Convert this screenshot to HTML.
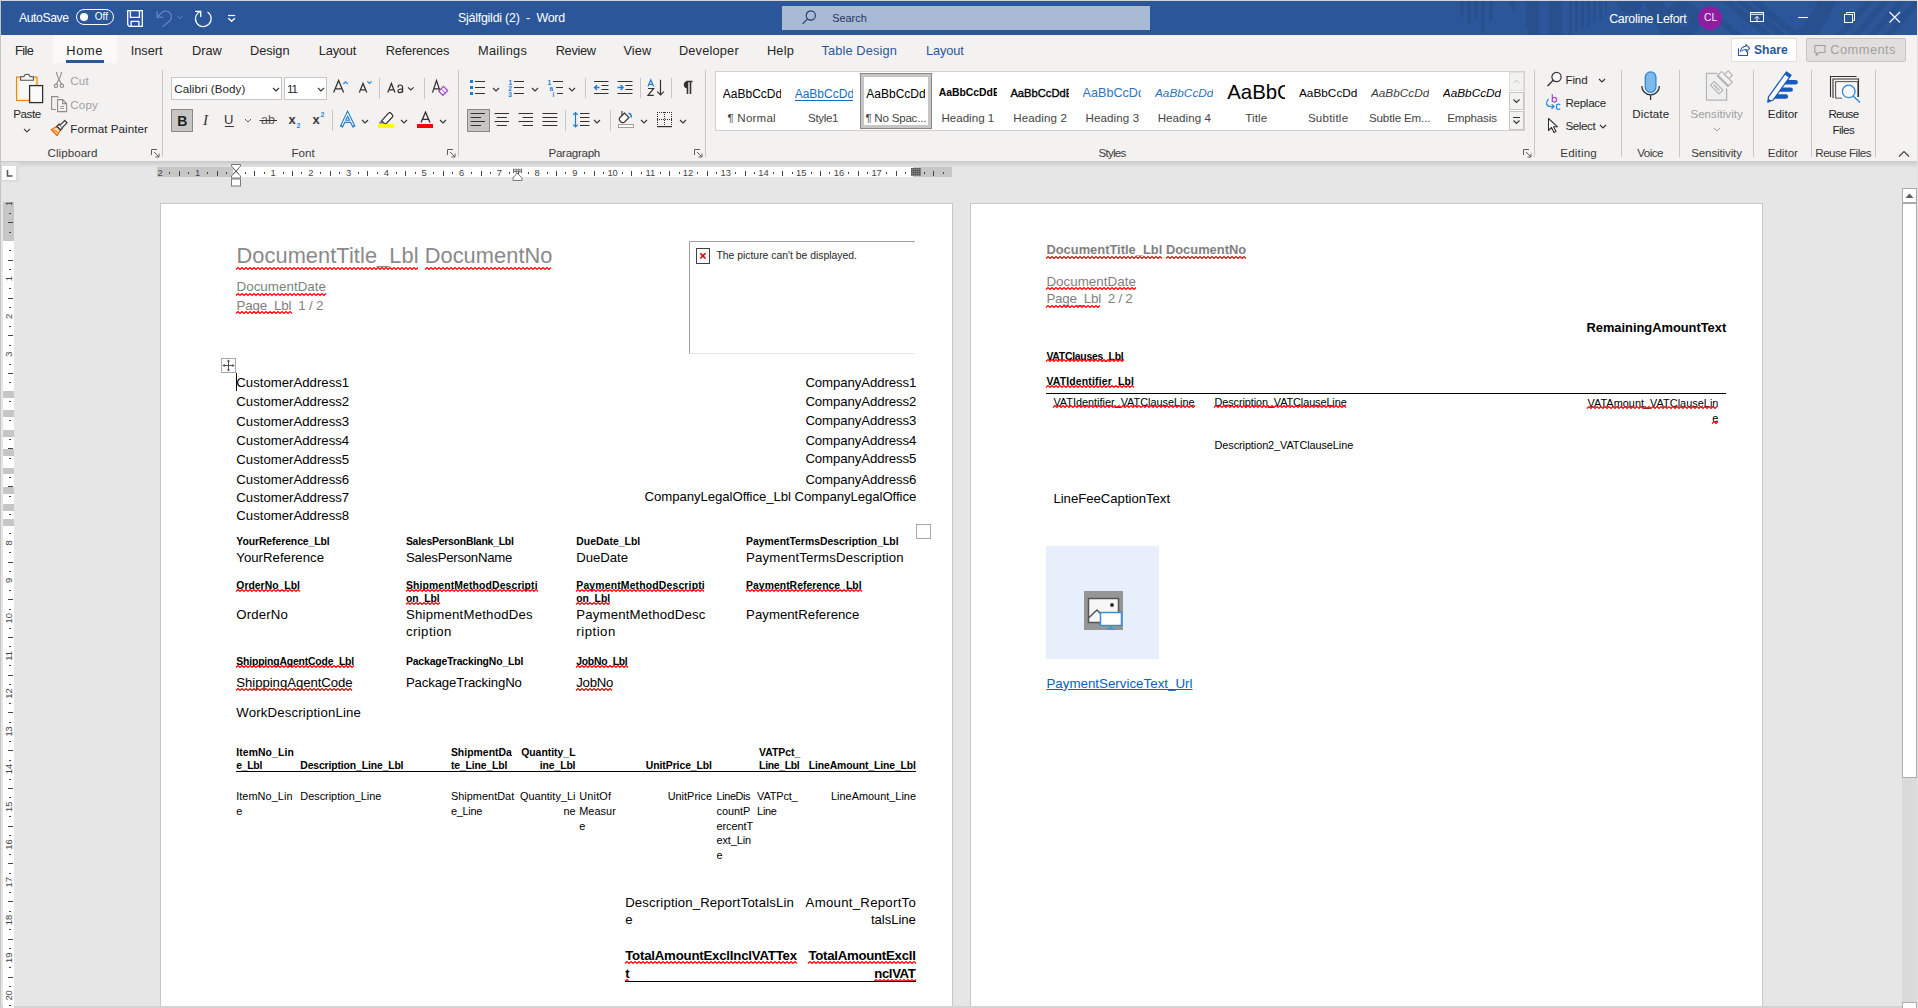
<!DOCTYPE html>
<html><head><meta charset="utf-8"><style>
html,body{margin:0;padding:0;}
body{width:1918px;height:1008px;overflow:hidden;position:relative;background:#e6e6e6;font-family:"Liberation Sans",sans-serif;color:#000;}
.t{position:absolute;white-space:nowrap;line-height:1;}
.r{position:absolute;}
.sq{text-decoration:underline wavy #e81123;text-decoration-thickness:1px;text-underline-offset:2px;text-decoration-skip-ink:none;}
</style></head><body>
<div class="r" style="left:0px;top:0px;width:1918px;height:1008px;background:#e6e6e6;"></div>
<div class="r" style="left:0px;top:0px;width:1918px;height:35px;background:#2b579a;"></div>
<div class="r" style="left:0px;top:0px;width:1918px;height:1px;background:#d4d4d4;"></div>
<div class="r" style="left:0px;top:35px;width:1918px;height:126px;background:#f3f2f1;"></div>
<div class="r" style="left:0px;top:0px;width:1px;height:1008px;background:#c4c4c4;"></div>
<div class="r" style="left:1px;top:161px;width:1917px;height:7px;background:linear-gradient(#c9c9c9,#e6e6e6);"></div>
<div class="r" style="left:160px;top:203px;width:793px;height:805px;background:#ffffff;box-sizing:border-box;border:1px solid #c6c6c6;border-bottom:none"></div>
<div class="r" style="left:970px;top:203px;width:793px;height:805px;background:#ffffff;box-sizing:border-box;border:1px solid #c6c6c6;border-bottom:none"></div>
<div class="r" style="left:0px;top:1006px;width:1918px;height:2px;background:#d4d4d4;"></div>
<div class="r" style="left:1902px;top:188px;width:15px;height:820px;background:#dadada;"></div>
<div class="r" style="left:1902px;top:188px;width:15px;height:15px;background:#ffffff;box-sizing:border-box;border:1px solid #ababab"></div>
<svg class="r" style="left:1902px;top:188px;" width="15" height="15" viewBox="0 0 15 15"><path d="M3.5 10 L7.5 5.5 L11.5 10 Z" fill="#606060"/></svg>
<div class="r" style="left:1902px;top:203px;width:15px;height:575px;background:#ffffff;box-sizing:border-box;border:1px solid #ababab"></div>
<div class="r" style="left:1902px;top:1002px;width:15px;height:6px;background:#ffffff;box-sizing:border-box;border:1px solid #ababab;border-bottom:none"></div>
<div class="r" style="left:1917px;top:168px;width:1px;height:840px;background:#d0d0d0;"></div>
<svg class="r" style="left:1440px;top:1px;" width="478" height="34" viewBox="0 0 478 34"><g fill="#284f8e"><rect x="20" y="0" width="4" height="16"/><rect x="27" y="0" width="4" height="23"/><rect x="34" y="0" width="4" height="17"/><rect x="41" y="0" width="4" height="32"/><rect x="49" y="0" width="4" height="20"/><path d="M68 0 H75 L75 13 Z"/><path d="M86 0 H99 V34 H90 L86 24 Z"/><rect x="109" y="0" width="13" height="34"/><rect x="129" y="0" width="3" height="34"/><rect x="135" y="0" width="3" height="31"/><rect x="141" y="0" width="3" height="28"/><rect x="147" y="0" width="3" height="25"/><rect x="153" y="0" width="3" height="22"/><rect x="159" y="0" width="3" height="19"/><rect x="165" y="0" width="2" height="14"/><path d="M177 0 H204 A13.5 12.5 0 0 1 177 0 Z"/></g><circle cx="242.5" cy="18.6" r="12.6" fill="none" stroke="#284f8e" stroke-width="11"/><g stroke="#284f8e" stroke-width="6"><path d="M284 -2 L330 36"/><path d="M298 -2 L344 36"/><path d="M312 -2 L358 36"/><path d="M274 14 L300 36"/></g><circle cx="300" cy="-31" r="92" fill="none" stroke="#284f8e" stroke-width="17"/><g stroke="#284f8e" stroke-width="6"><path d="M432 -2 L398 36"/><path d="M448 -2 L414 36"/><path d="M464 -2 L430 36"/><path d="M480 -2 L446 36"/></g></svg>
<div class="t" style="top:11.67px;font-size:12.2px;left:19.00px;color:#ffffff;letter-spacing:-0.415px;white-space:pre;">AutoSave</div>
<div class="r" style="left:76px;top:9px;width:38px;height:16px;box-sizing:border-box;border:1.3px solid #fff;border-radius:8px"></div>
<div class="r" style="left:80px;top:13px;width:8px;height:8px;background:#fff;border-radius:50%"></div>
<div class="t" style="top:12.34px;font-size:10.0px;left:94.80px;color:#ffffff;">Off</div>
<svg class="r" style="left:126px;top:10px;" width="18" height="18" viewBox="0 0 18 18"><path d="M1.7 0.7 H16.3 V16.3 H3.2 L1.7 14.8 Z" fill="none" stroke="#fff" stroke-width="1.3"/><path d="M4.4 1 V7.4 H13.4 V1" fill="none" stroke="#fff" stroke-width="1.3"/><path d="M5.1 16.3 V11.4 H12.9 V16.3" fill="none" stroke="#fff" stroke-width="1.3"/></svg>
<svg class="r" style="left:154px;top:10px;" width="32" height="18" viewBox="0 0 32 18"><path d="M3.2 1.2 V7.2 H9.2" fill="none" stroke="#6d8ec4" stroke-width="1.1"/><path d="M3.2 7.2 L7.5 2.8 A5.5 5.5 0 0 1 15.8 10.8 L8.5 16.8" fill="none" stroke="#6d8ec4" stroke-width="1.1"/><path d="M23.5 6.2 L26 8.7 L28.5 6.2" fill="none" stroke="#6d8ec4" stroke-width="0.9"/></svg>
<svg class="r" style="left:193px;top:10px;" width="20" height="18" viewBox="0 0 20 18"><path d="M7.7 1.3 A7.85 7.85 0 1 0 14.5 2.1" fill="none" stroke="#fff" stroke-width="1.2"/><path d="M2 1.3 H7.7 V6.9" fill="none" stroke="#fff" stroke-width="1.3"/></svg>
<svg class="r" style="left:226px;top:12px;" width="12" height="12" viewBox="0 0 12 12"><path d="M2 3.5 H9.2" stroke="#fff" stroke-width="1.2"/><path d="M2.3 6.2 L5.6 9.2 L8.9 6.2" fill="none" stroke="#fff" stroke-width="1.4"/></svg>
<div class="t" style="top:12.00px;font-size:12.4px;left:457.90px;color:#ffffff;letter-spacing:-0.217px;white-space:pre;">Sjálfgildi (2)  -  Word</div>
<div class="r" style="left:782px;top:6px;width:368px;height:24px;background:#a8bad6;"></div>
<svg class="r" style="left:800px;top:8px;" width="18" height="20" viewBox="0 0 18 20"><circle cx="10.8" cy="7.5" r="4.6" fill="none" stroke="#1f3864" stroke-width="1.1"/><path d="M7.6 10.8 L2.6 15.8" stroke="#1f3864" stroke-width="1.2"/></svg>
<div class="t" style="top:12.87px;font-size:10.9px;left:832.20px;color:#1e3762;">Search</div>
<div class="t" style="top:12.50px;font-size:12.4px;left:1609.20px;color:#ffffff;letter-spacing:-0.273px;white-space:pre;">Caroline Lefort</div>
<div class="r" style="left:1698px;top:6px;width:24px;height:24px;background:#8e1e9f;border-radius:50%"></div>
<div class="t" style="top:12.88px;font-size:10.3px;left:1704.00px;color:#f4e6f7;">CL</div>
<svg class="r" style="left:1748px;top:10px;" width="18" height="14" viewBox="0 0 18 14"><rect x="2.5" y="2.5" width="13" height="9" fill="none" stroke="#fff" stroke-width="1"/><path d="M2.5 4.3 H15.5" stroke="#fff" stroke-width="1"/><path d="M9 11 V6.5 M6.8 8.6 L9 6.4 L11.2 8.6" fill="none" stroke="#fff" stroke-width="1"/></svg>
<div class="r" style="left:1798px;top:17px;width:10px;height:1px;background:#fff;"></div>
<svg class="r" style="left:1842px;top:10px;" width="14" height="14" viewBox="0 0 14 14"><rect x="2.5" y="4.5" width="8" height="8" fill="none" stroke="#fff" stroke-width="1"/><path d="M4.5 4.5 V2.5 H12.5 V10.5 H10.5" fill="none" stroke="#fff" stroke-width="1"/></svg>
<svg class="r" style="left:1888px;top:10px;" width="14" height="14" viewBox="0 0 14 14"><path d="M1.5 2 L12 12.5 M12 2 L1.5 12.5" stroke="#fff" stroke-width="1.1"/></svg>
<div class="r" style="left:1917px;top:0px;width:1px;height:1008px;background:#e2e2e2;"></div>
<div class="r" style="left:53px;top:35px;width:64px;height:28px;background:#faf9f8;"></div>
<div class="r" style="left:66px;top:60px;width:38px;height:3px;background:#2b579a;"></div>
<div class="t" style="top:44.67px;font-size:12.8px;left:15.00px;color:#262626;letter-spacing:-0.608px;">File</div>
<div class="t" style="top:44.67px;font-size:12.8px;left:66.30px;color:#201f1e;letter-spacing:0.686px;">Home</div>
<div class="t" style="top:44.67px;font-size:12.8px;left:130.80px;color:#262626;letter-spacing:-0.062px;">Insert</div>
<div class="t" style="top:44.67px;font-size:12.8px;left:192.00px;color:#262626;letter-spacing:-0.023px;">Draw</div>
<div class="t" style="top:44.67px;font-size:12.8px;left:250.00px;color:#262626;letter-spacing:-0.068px;">Design</div>
<div class="t" style="top:44.67px;font-size:12.8px;left:318.80px;color:#262626;letter-spacing:-0.186px;">Layout</div>
<div class="t" style="top:44.67px;font-size:12.8px;left:385.80px;color:#262626;letter-spacing:-0.217px;">References</div>
<div class="t" style="top:44.67px;font-size:12.8px;left:478.00px;color:#262626;letter-spacing:0.265px;">Mailings</div>
<div class="t" style="top:44.67px;font-size:12.8px;left:555.70px;color:#262626;letter-spacing:-0.314px;">Review</div>
<div class="t" style="top:44.67px;font-size:12.8px;left:623.40px;color:#262626;letter-spacing:0.096px;">View</div>
<div class="t" style="top:44.67px;font-size:12.8px;left:678.90px;color:#262626;letter-spacing:0.182px;">Developer</div>
<div class="t" style="top:44.67px;font-size:12.8px;left:766.90px;color:#262626;letter-spacing:0.192px;">Help</div>
<div class="t" style="top:44.67px;font-size:12.8px;left:821.50px;color:#2b579a;letter-spacing:0.119px;">Table Design</div>
<div class="t" style="top:44.67px;font-size:12.8px;left:926.10px;color:#2b579a;letter-spacing:-0.146px;">Layout</div>
<div class="r" style="left:1731px;top:38px;width:66px;height:24px;background:#ffffff;box-sizing:border-box;border:1px solid #e1dfdd;border-radius:2px"></div>
<svg class="r" style="left:1736px;top:43px;" width="16" height="15" viewBox="0 0 16 15"><path d="M2.5 5.3 V12.5 H11.5 V8.4" fill="none" stroke="#2b579a" stroke-width="1.1"/><path d="M4.4 8.9 Q4.9 3.7 9.8 3.2 V1.4 L13.7 5.4 L10.3 8.6 V6.6 Q7.1 6.5 5.6 8.1" fill="none" stroke="#2b579a" stroke-width="1.05" stroke-linejoin="round"/></svg>
<div class="t" style="top:44.31px;font-size:12.16px;left:1754.00px;font-weight:700;color:#2b579a;">Share</div>
<div class="r" style="left:1806px;top:38px;width:100px;height:24px;background:#e1dfdd;box-sizing:border-box;border:1px solid #c8c6c4;border-radius:2px"></div>
<svg class="r" style="left:1813px;top:44px;" width="14" height="13" viewBox="0 0 14 13"><path d="M1.8 1.5 H12 V8.5 H6 L3.3 11.3 V8.5 H1.8 Z" fill="none" stroke="#a19f9d" stroke-width="1.1"/></svg>
<div class="t" style="top:43.68px;font-size:12.9px;left:1830.30px;color:#a19f9d;letter-spacing:0.406px;white-space:pre;">Comments</div>
<div class="t" style="top:245.15px;font-size:21.8px;left:236.50px;color:#8a8a8a;letter-spacing:0.066px;white-space:pre;">DocumentTitle_Lbl DocumentNo</div>
<svg class="r" style="left:236px;top:267px;overflow:visible" width="183" height="3"><polyline points="0,2.5 2,0.5 4,2.5 6,0.5 8,2.5 10,0.5 12,2.5 14,0.5 16,2.5 18,0.5 20,2.5 22,0.5 24,2.5 26,0.5 28,2.5 30,0.5 32,2.5 34,0.5 36,2.5 38,0.5 40,2.5 42,0.5 44,2.5 46,0.5 48,2.5 50,0.5 52,2.5 54,0.5 56,2.5 58,0.5 60,2.5 62,0.5 64,2.5 66,0.5 68,2.5 70,0.5 72,2.5 74,0.5 76,2.5 78,0.5 80,2.5 82,0.5 84,2.5 86,0.5 88,2.5 90,0.5 92,2.5 94,0.5 96,2.5 98,0.5 100,2.5 102,0.5 104,2.5 106,0.5 108,2.5 110,0.5 112,2.5 114,0.5 116,2.5 118,0.5 120,2.5 122,0.5 124,2.5 126,0.5 128,2.5 130,0.5 132,2.5 134,0.5 136,2.5 138,0.5 140,2.5 142,0.5 144,2.5 146,0.5 148,2.5 150,0.5 152,2.5 154,0.5 156,2.5 158,0.5 160,2.5 162,0.5 164,2.5 166,0.5 168,2.5 170,0.5 172,2.5 174,0.5 176,2.5 178,0.5 180,2.5 182,0.5" fill="none" stroke="#ff0000" stroke-width="1.15"/></svg>
<svg class="r" style="left:425px;top:267px;overflow:visible" width="128" height="3"><polyline points="0,2.5 2,0.5 4,2.5 6,0.5 8,2.5 10,0.5 12,2.5 14,0.5 16,2.5 18,0.5 20,2.5 22,0.5 24,2.5 26,0.5 28,2.5 30,0.5 32,2.5 34,0.5 36,2.5 38,0.5 40,2.5 42,0.5 44,2.5 46,0.5 48,2.5 50,0.5 52,2.5 54,0.5 56,2.5 58,0.5 60,2.5 62,0.5 64,2.5 66,0.5 68,2.5 70,0.5 72,2.5 74,0.5 76,2.5 78,0.5 80,2.5 82,0.5 84,2.5 86,0.5 88,2.5 90,0.5 92,2.5 94,0.5 96,2.5 98,0.5 100,2.5 102,0.5 104,2.5 106,0.5 108,2.5 110,0.5 112,2.5 114,0.5 116,2.5 118,0.5 120,2.5 122,0.5 124,2.5 126,0.5" fill="none" stroke="#ff0000" stroke-width="1.15"/></svg>
<div class="t" style="top:280.46px;font-size:13.4px;left:236.50px;color:#7f7f7f;letter-spacing:0.012px;white-space:pre;">DocumentDate</div>
<svg class="r" style="left:236px;top:293px;overflow:visible" width="91" height="3"><polyline points="0,2.5 2,0.5 4,2.5 6,0.5 8,2.5 10,0.5 12,2.5 14,0.5 16,2.5 18,0.5 20,2.5 22,0.5 24,2.5 26,0.5 28,2.5 30,0.5 32,2.5 34,0.5 36,2.5 38,0.5 40,2.5 42,0.5 44,2.5 46,0.5 48,2.5 50,0.5 52,2.5 54,0.5 56,2.5 58,0.5 60,2.5 62,0.5 64,2.5 66,0.5 68,2.5 70,0.5 72,2.5 74,0.5 76,2.5 78,0.5 80,2.5 82,0.5 84,2.5 86,0.5 88,2.5 90,0.5" fill="none" stroke="#ff0000" stroke-width="1.15"/></svg>
<div class="t" style="top:298.76px;font-size:13.4px;left:236.50px;color:#7f7f7f;letter-spacing:-0.224px;white-space:pre;">Page_Lbl  1 / 2</div>
<svg class="r" style="left:236px;top:311px;overflow:visible" width="57" height="3"><polyline points="0,2.5 2,0.5 4,2.5 6,0.5 8,2.5 10,0.5 12,2.5 14,0.5 16,2.5 18,0.5 20,2.5 22,0.5 24,2.5 26,0.5 28,2.5 30,0.5 32,2.5 34,0.5 36,2.5 38,0.5 40,2.5 42,0.5 44,2.5 46,0.5 48,2.5 50,0.5 52,2.5 54,0.5 56,2.5" fill="none" stroke="#ff0000" stroke-width="1.15"/></svg>
<div class="r" style="left:689px;top:241px;width:226px;height:113px;box-sizing:border-box;border-left:1px solid #a0a0a0;border-top:1px solid #a0a0a0;border-bottom:1px solid #e6e6e6"></div>
<div class="r" style="left:696px;top:248px;width:14px;height:16px;background:#fff;box-sizing:border-box;border:1px solid #404040;border-right-width:1.5px;border-bottom-width:1.5px"></div>
<svg class="r" style="left:696px;top:248px;" width="14" height="16" viewBox="0 0 14 16"><path d="M4.3 5.3 L9.5 10.5 M9.5 5.3 L4.3 10.5" stroke="#e00000" stroke-width="1.6"/></svg>
<div class="t" style="top:250.60px;font-size:10.4px;left:716.40px;color:#262626;">The picture can&#39;t be displayed.</div>
<div class="r" style="left:221px;top:358px;width:15px;height:15px;background:#fff;box-sizing:border-box;border:1px solid #a8a8a8"></div>
<svg class="r" style="left:221px;top:358px;" width="15" height="15" viewBox="0 0 15 15"><path d="M7.5 2.5 V12.5 M2.5 7.5 H12.5" stroke="#505050" stroke-width="1"/><path d="M7.5 1.5 L5.8 3.6 H9.2Z M7.5 13.5 L5.8 11.4 H9.2Z M1.5 7.5 L3.6 5.8 V9.2Z M13.5 7.5 L11.4 5.8 V9.2Z" fill="#505050"/></svg>
<div class="r" style="left:236px;top:373px;width:1px;height:18px;background:#000;"></div>
<div class="t" style="top:375.93px;font-size:13.2px;left:236.30px;letter-spacing:0.002px;white-space:pre;">CustomerAddress1</div>
<div class="t" style="top:394.73px;font-size:13.2px;left:236.30px;letter-spacing:0.002px;white-space:pre;">CustomerAddress2</div>
<div class="t" style="top:415.13px;font-size:13.2px;left:236.30px;letter-spacing:0.002px;white-space:pre;">CustomerAddress3</div>
<div class="t" style="top:433.93px;font-size:13.2px;left:236.30px;letter-spacing:0.002px;white-space:pre;">CustomerAddress4</div>
<div class="t" style="top:452.73px;font-size:13.2px;left:236.30px;letter-spacing:0.002px;white-space:pre;">CustomerAddress5</div>
<div class="t" style="top:472.93px;font-size:13.2px;left:236.30px;letter-spacing:0.002px;white-space:pre;">CustomerAddress6</div>
<div class="t" style="top:491.03px;font-size:13.2px;left:236.30px;letter-spacing:0.002px;white-space:pre;">CustomerAddress7</div>
<div class="t" style="top:509.03px;font-size:13.2px;left:236.30px;letter-spacing:0.002px;white-space:pre;">CustomerAddress8</div>
<div class="t" style="top:375.63px;font-size:13.2px;right:1001.79px;letter-spacing:-0.089px;white-space:pre;">CompanyAddress1</div>
<div class="t" style="top:394.83px;font-size:13.2px;right:1001.79px;letter-spacing:-0.089px;white-space:pre;">CompanyAddress2</div>
<div class="t" style="top:414.33px;font-size:13.2px;right:1001.79px;letter-spacing:-0.089px;white-space:pre;">CompanyAddress3</div>
<div class="t" style="top:433.73px;font-size:13.2px;right:1001.79px;letter-spacing:-0.089px;white-space:pre;">CompanyAddress4</div>
<div class="t" style="top:452.43px;font-size:13.2px;right:1001.79px;letter-spacing:-0.089px;white-space:pre;">CompanyAddress5</div>
<div class="t" style="top:472.83px;font-size:13.2px;right:1001.79px;letter-spacing:-0.089px;white-space:pre;">CompanyAddress6</div>
<div class="t" style="top:490.13px;font-size:13.2px;right:1001.77px;letter-spacing:-0.067px;white-space:pre;">CompanyLegalOffice_Lbl CompanyLegalOffice</div>
<div class="r" style="left:916px;top:524px;width:15px;height:15px;box-sizing:border-box;border:1px solid #a8a8a8"></div>
<div class="t" style="top:536.50px;font-size:10.4px;left:236.30px;font-weight:700;letter-spacing:-0.068px;white-space:pre;">YourReference_Lbl</div>
<div class="t" style="top:536.50px;font-size:10.4px;left:405.90px;font-weight:700;letter-spacing:-0.217px;white-space:pre;">SalesPersonBlank_Lbl</div>
<div class="t" style="top:536.50px;font-size:10.4px;left:576.30px;font-weight:700;letter-spacing:0.044px;white-space:pre;">DueDate_Lbl</div>
<div class="t" style="top:536.50px;font-size:10.4px;left:746.10px;font-weight:700;letter-spacing:0.009px;white-space:pre;">PaymentTermsDescription_Lbl</div>
<div class="t" style="top:550.63px;font-size:13.2px;left:236.30px;letter-spacing:0.019px;white-space:pre;">YourReference</div>
<div class="t" style="top:550.63px;font-size:13.2px;left:405.90px;letter-spacing:-0.246px;white-space:pre;">SalesPersonName</div>
<div class="t" style="top:550.63px;font-size:13.2px;left:576.30px;letter-spacing:-0.049px;white-space:pre;">DueDate</div>
<div class="t" style="top:550.63px;font-size:13.2px;left:746.10px;letter-spacing:0.166px;white-space:pre;">PaymentTermsDescription</div>
<div class="t" style="top:581.30px;font-size:10.4px;left:236.30px;font-weight:700;letter-spacing:0.014px;white-space:pre;">OrderNo_Lbl</div>
<svg class="r" style="left:236px;top:589px;overflow:visible" width="65" height="3"><polyline points="0,2.5 2,0.5 4,2.5 6,0.5 8,2.5 10,0.5 12,2.5 14,0.5 16,2.5 18,0.5 20,2.5 22,0.5 24,2.5 26,0.5 28,2.5 30,0.5 32,2.5 34,0.5 36,2.5 38,0.5 40,2.5 42,0.5 44,2.5 46,0.5 48,2.5 50,0.5 52,2.5 54,0.5 56,2.5 58,0.5 60,2.5 62,0.5 64,2.5" fill="none" stroke="#ff0000" stroke-width="1.15"/></svg>
<div class="t" style="top:581.30px;font-size:10.4px;left:405.90px;font-weight:700;letter-spacing:0.134px;white-space:pre;">ShipmentMethodDescripti</div>
<svg class="r" style="left:406px;top:589px;overflow:visible" width="133" height="3"><polyline points="0,2.5 2,0.5 4,2.5 6,0.5 8,2.5 10,0.5 12,2.5 14,0.5 16,2.5 18,0.5 20,2.5 22,0.5 24,2.5 26,0.5 28,2.5 30,0.5 32,2.5 34,0.5 36,2.5 38,0.5 40,2.5 42,0.5 44,2.5 46,0.5 48,2.5 50,0.5 52,2.5 54,0.5 56,2.5 58,0.5 60,2.5 62,0.5 64,2.5 66,0.5 68,2.5 70,0.5 72,2.5 74,0.5 76,2.5 78,0.5 80,2.5 82,0.5 84,2.5 86,0.5 88,2.5 90,0.5 92,2.5 94,0.5 96,2.5 98,0.5 100,2.5 102,0.5 104,2.5 106,0.5 108,2.5 110,0.5 112,2.5 114,0.5 116,2.5 118,0.5 120,2.5 122,0.5 124,2.5 126,0.5 128,2.5 130,0.5 132,2.5" fill="none" stroke="#ff0000" stroke-width="1.15"/></svg>
<div class="t" style="top:594.10px;font-size:10.4px;left:405.90px;font-weight:700;letter-spacing:-0.056px;white-space:pre;">on_Lbl</div>
<svg class="r" style="left:406px;top:602px;overflow:visible" width="35" height="3"><polyline points="0,2.5 2,0.5 4,2.5 6,0.5 8,2.5 10,0.5 12,2.5 14,0.5 16,2.5 18,0.5 20,2.5 22,0.5 24,2.5 26,0.5 28,2.5 30,0.5 32,2.5 34,0.5" fill="none" stroke="#ff0000" stroke-width="1.15"/></svg>
<div class="t" style="top:581.30px;font-size:10.4px;left:576.30px;font-weight:700;letter-spacing:0.175px;white-space:pre;">PaymentMethodDescripti</div>
<svg class="r" style="left:576px;top:589px;overflow:visible" width="130" height="3"><polyline points="0,2.5 2,0.5 4,2.5 6,0.5 8,2.5 10,0.5 12,2.5 14,0.5 16,2.5 18,0.5 20,2.5 22,0.5 24,2.5 26,0.5 28,2.5 30,0.5 32,2.5 34,0.5 36,2.5 38,0.5 40,2.5 42,0.5 44,2.5 46,0.5 48,2.5 50,0.5 52,2.5 54,0.5 56,2.5 58,0.5 60,2.5 62,0.5 64,2.5 66,0.5 68,2.5 70,0.5 72,2.5 74,0.5 76,2.5 78,0.5 80,2.5 82,0.5 84,2.5 86,0.5 88,2.5 90,0.5 92,2.5 94,0.5 96,2.5 98,0.5 100,2.5 102,0.5 104,2.5 106,0.5 108,2.5 110,0.5 112,2.5 114,0.5 116,2.5 118,0.5 120,2.5 122,0.5 124,2.5 126,0.5 128,2.5" fill="none" stroke="#ff0000" stroke-width="1.15"/></svg>
<div class="t" style="top:594.10px;font-size:10.4px;left:576.30px;font-weight:700;letter-spacing:-0.056px;white-space:pre;">on_Lbl</div>
<svg class="r" style="left:576px;top:602px;overflow:visible" width="35" height="3"><polyline points="0,2.5 2,0.5 4,2.5 6,0.5 8,2.5 10,0.5 12,2.5 14,0.5 16,2.5 18,0.5 20,2.5 22,0.5 24,2.5 26,0.5 28,2.5 30,0.5 32,2.5 34,0.5" fill="none" stroke="#ff0000" stroke-width="1.15"/></svg>
<div class="t" style="top:581.30px;font-size:10.4px;left:746.10px;font-weight:700;letter-spacing:0.031px;white-space:pre;">PaymentReference_Lbl</div>
<svg class="r" style="left:746px;top:589px;overflow:visible" width="117" height="3"><polyline points="0,2.5 2,0.5 4,2.5 6,0.5 8,2.5 10,0.5 12,2.5 14,0.5 16,2.5 18,0.5 20,2.5 22,0.5 24,2.5 26,0.5 28,2.5 30,0.5 32,2.5 34,0.5 36,2.5 38,0.5 40,2.5 42,0.5 44,2.5 46,0.5 48,2.5 50,0.5 52,2.5 54,0.5 56,2.5 58,0.5 60,2.5 62,0.5 64,2.5 66,0.5 68,2.5 70,0.5 72,2.5 74,0.5 76,2.5 78,0.5 80,2.5 82,0.5 84,2.5 86,0.5 88,2.5 90,0.5 92,2.5 94,0.5 96,2.5 98,0.5 100,2.5 102,0.5 104,2.5 106,0.5 108,2.5 110,0.5 112,2.5 114,0.5 116,2.5" fill="none" stroke="#ff0000" stroke-width="1.15"/></svg>
<div class="t" style="top:607.83px;font-size:13.2px;left:236.30px;letter-spacing:0.148px;white-space:pre;">OrderNo</div>
<div class="t" style="top:607.83px;font-size:13.2px;left:405.90px;letter-spacing:0.228px;white-space:pre;">ShipmentMethodDes</div>
<div class="t" style="top:625.33px;font-size:13.2px;left:405.90px;letter-spacing:0.436px;white-space:pre;">cription</div>
<div class="t" style="top:607.83px;font-size:13.2px;left:576.30px;letter-spacing:0.182px;white-space:pre;">PaymentMethodDesc</div>
<div class="t" style="top:625.33px;font-size:13.2px;left:576.30px;letter-spacing:0.508px;white-space:pre;">ription</div>
<div class="t" style="top:607.83px;font-size:13.2px;left:746.10px;letter-spacing:0.021px;white-space:pre;">PaymentReference</div>
<div class="t" style="top:656.90px;font-size:10.4px;left:236.30px;font-weight:700;letter-spacing:-0.166px;white-space:pre;">ShippingAgentCode_Lbl</div>
<svg class="r" style="left:236px;top:665px;overflow:visible" width="119" height="3"><polyline points="0,2.5 2,0.5 4,2.5 6,0.5 8,2.5 10,0.5 12,2.5 14,0.5 16,2.5 18,0.5 20,2.5 22,0.5 24,2.5 26,0.5 28,2.5 30,0.5 32,2.5 34,0.5 36,2.5 38,0.5 40,2.5 42,0.5 44,2.5 46,0.5 48,2.5 50,0.5 52,2.5 54,0.5 56,2.5 58,0.5 60,2.5 62,0.5 64,2.5 66,0.5 68,2.5 70,0.5 72,2.5 74,0.5 76,2.5 78,0.5 80,2.5 82,0.5 84,2.5 86,0.5 88,2.5 90,0.5 92,2.5 94,0.5 96,2.5 98,0.5 100,2.5 102,0.5 104,2.5 106,0.5 108,2.5 110,0.5 112,2.5 114,0.5 116,2.5 118,0.5" fill="none" stroke="#ff0000" stroke-width="1.15"/></svg>
<div class="t" style="top:656.90px;font-size:10.4px;left:405.90px;font-weight:700;letter-spacing:-0.131px;white-space:pre;">PackageTrackingNo_Lbl</div>
<div class="t" style="top:656.90px;font-size:10.4px;left:576.30px;font-weight:700;letter-spacing:-0.278px;white-space:pre;">JobNo_Lbl</div>
<svg class="r" style="left:576px;top:665px;overflow:visible" width="53" height="3"><polyline points="0,2.5 2,0.5 4,2.5 6,0.5 8,2.5 10,0.5 12,2.5 14,0.5 16,2.5 18,0.5 20,2.5 22,0.5 24,2.5 26,0.5 28,2.5 30,0.5 32,2.5 34,0.5 36,2.5 38,0.5 40,2.5 42,0.5 44,2.5 46,0.5 48,2.5 50,0.5 52,2.5" fill="none" stroke="#ff0000" stroke-width="1.15"/></svg>
<div class="t" style="top:675.53px;font-size:13.2px;left:236.30px;letter-spacing:-0.058px;white-space:pre;">ShippingAgentCode</div>
<svg class="r" style="left:236px;top:688px;overflow:visible" width="118" height="3"><polyline points="0,2.5 2,0.5 4,2.5 6,0.5 8,2.5 10,0.5 12,2.5 14,0.5 16,2.5 18,0.5 20,2.5 22,0.5 24,2.5 26,0.5 28,2.5 30,0.5 32,2.5 34,0.5 36,2.5 38,0.5 40,2.5 42,0.5 44,2.5 46,0.5 48,2.5 50,0.5 52,2.5 54,0.5 56,2.5 58,0.5 60,2.5 62,0.5 64,2.5 66,0.5 68,2.5 70,0.5 72,2.5 74,0.5 76,2.5 78,0.5 80,2.5 82,0.5 84,2.5 86,0.5 88,2.5 90,0.5 92,2.5 94,0.5 96,2.5 98,0.5 100,2.5 102,0.5 104,2.5 106,0.5 108,2.5 110,0.5 112,2.5 114,0.5 116,2.5" fill="none" stroke="#ff0000" stroke-width="1.15"/></svg>
<div class="t" style="top:675.53px;font-size:13.2px;left:405.90px;letter-spacing:-0.141px;white-space:pre;">PackageTrackingNo</div>
<div class="t" style="top:675.53px;font-size:13.2px;left:576.30px;letter-spacing:-0.289px;white-space:pre;">JobNo</div>
<svg class="r" style="left:576px;top:688px;overflow:visible" width="38" height="3"><polyline points="0,2.5 2,0.5 4,2.5 6,0.5 8,2.5 10,0.5 12,2.5 14,0.5 16,2.5 18,0.5 20,2.5 22,0.5 24,2.5 26,0.5 28,2.5 30,0.5 32,2.5 34,0.5 36,2.5" fill="none" stroke="#ff0000" stroke-width="1.15"/></svg>
<div class="t" style="top:706.03px;font-size:13.2px;left:236.30px;letter-spacing:0.176px;white-space:pre;">WorkDescriptionLine</div>
<div class="t" style="top:748.10px;font-size:10.4px;left:236.20px;font-weight:700;letter-spacing:0.109px;white-space:pre;">ItemNo_Lin</div>
<div class="t" style="top:760.60px;font-size:10.4px;left:236.20px;font-weight:700;letter-spacing:-0.240px;white-space:pre;">e_Lbl</div>
<div class="t" style="top:760.60px;font-size:10.4px;left:300.30px;font-weight:700;letter-spacing:-0.129px;white-space:pre;">Description_Line_Lbl</div>
<div class="t" style="top:748.10px;font-size:10.4px;left:450.90px;font-weight:700;letter-spacing:0.037px;white-space:pre;">ShipmentDa</div>
<div class="t" style="top:760.60px;font-size:10.4px;left:450.90px;font-weight:700;letter-spacing:-0.118px;white-space:pre;">te_Line_Lbl</div>
<div class="t" style="top:748.10px;font-size:10.4px;right:1342.49px;font-weight:700;letter-spacing:0.010px;white-space:pre;">Quantity_L</div>
<div class="t" style="top:760.60px;font-size:10.4px;right:1342.62px;font-weight:700;letter-spacing:-0.117px;white-space:pre;">ine_Lbl</div>
<div class="t" style="top:760.60px;font-size:10.4px;right:1206.07px;font-weight:700;letter-spacing:-0.069px;white-space:pre;">UnitPrice_Lbl</div>
<div class="t" style="top:748.10px;font-size:10.4px;left:759.10px;font-weight:700;letter-spacing:-0.004px;white-space:pre;">VATPct_</div>
<div class="t" style="top:760.60px;font-size:10.4px;left:759.10px;font-weight:700;letter-spacing:-0.308px;white-space:pre;">Line_Lbl</div>
<div class="t" style="top:760.60px;font-size:10.4px;right:1002.11px;font-weight:700;letter-spacing:-0.105px;white-space:pre;">LineAmount_Line_Lbl</div>
<div class="r" style="left:236px;top:771px;width:680px;height:1px;background:#000;"></div>
<div class="t" style="top:791.17px;font-size:10.9px;left:236.20px;letter-spacing:0.063px;white-space:pre;">ItemNo_Lin</div>
<div class="t" style="top:806.07px;font-size:10.9px;left:236.20px;white-space:pre;">e</div>
<div class="t" style="top:791.17px;font-size:10.9px;left:300.30px;letter-spacing:-0.006px;white-space:pre;">Description_Line</div>
<div class="t" style="top:791.17px;font-size:10.9px;left:450.90px;letter-spacing:0.039px;white-space:pre;">ShipmentDat</div>
<div class="t" style="top:806.07px;font-size:10.9px;left:450.90px;letter-spacing:-0.246px;white-space:pre;">e_Line</div>
<div class="t" style="top:791.17px;font-size:10.9px;right:1342.45px;letter-spacing:0.046px;white-space:pre;">Quantity_Li</div>
<div class="t" style="top:806.07px;font-size:10.9px;right:1342.50px;white-space:pre;">ne</div>
<div class="t" style="top:791.17px;font-size:10.9px;left:579.20px;letter-spacing:0.202px;white-space:pre;">UnitOf</div>
<div class="t" style="top:806.07px;font-size:10.9px;left:579.20px;letter-spacing:0.071px;white-space:pre;">Measur</div>
<div class="t" style="top:820.57px;font-size:10.9px;left:579.20px;white-space:pre;">e</div>
<div class="t" style="top:791.17px;font-size:10.9px;right:1205.98px;letter-spacing:0.023px;white-space:pre;">UnitPrice</div>
<div class="t" style="top:791.17px;font-size:10.9px;left:716.50px;letter-spacing:-0.375px;white-space:pre;">LineDis</div>
<div class="t" style="top:806.07px;font-size:10.9px;left:716.50px;letter-spacing:-0.047px;white-space:pre;">countP</div>
<div class="t" style="top:820.57px;font-size:10.9px;left:716.50px;letter-spacing:-0.042px;white-space:pre;">ercentT</div>
<div class="t" style="top:835.17px;font-size:10.9px;left:716.50px;letter-spacing:-0.074px;white-space:pre;">ext_Lin</div>
<div class="t" style="top:849.77px;font-size:10.9px;left:716.50px;white-space:pre;">e</div>
<div class="t" style="top:791.17px;font-size:10.9px;left:757.10px;letter-spacing:-0.132px;white-space:pre;">VATPct_</div>
<div class="t" style="top:806.07px;font-size:10.9px;left:757.10px;letter-spacing:-0.269px;white-space:pre;">Line</div>
<div class="t" style="top:791.17px;font-size:10.9px;right:1001.98px;letter-spacing:0.019px;white-space:pre;">LineAmount_Line</div>
<div class="t" style="top:895.53px;font-size:13.2px;left:625.20px;letter-spacing:0.143px;white-space:pre;">Description_ReportTotalsLin</div>
<div class="t" style="top:913.33px;font-size:13.2px;left:625.20px;white-space:pre;">e</div>
<div class="t" style="top:895.53px;font-size:13.2px;right:1001.92px;letter-spacing:0.280px;white-space:pre;">Amount_ReportTo</div>
<div class="t" style="top:913.33px;font-size:13.2px;right:1002.28px;letter-spacing:-0.085px;white-space:pre;">talsLine</div>
<div class="t" style="top:949.03px;font-size:13.2px;left:625.20px;font-weight:700;letter-spacing:-0.187px;white-space:pre;">TotalAmountExclInclVATTex</div>
<svg class="r" style="left:625px;top:961px;overflow:visible" width="173" height="3"><polyline points="0,2.5 2,0.5 4,2.5 6,0.5 8,2.5 10,0.5 12,2.5 14,0.5 16,2.5 18,0.5 20,2.5 22,0.5 24,2.5 26,0.5 28,2.5 30,0.5 32,2.5 34,0.5 36,2.5 38,0.5 40,2.5 42,0.5 44,2.5 46,0.5 48,2.5 50,0.5 52,2.5 54,0.5 56,2.5 58,0.5 60,2.5 62,0.5 64,2.5 66,0.5 68,2.5 70,0.5 72,2.5 74,0.5 76,2.5 78,0.5 80,2.5 82,0.5 84,2.5 86,0.5 88,2.5 90,0.5 92,2.5 94,0.5 96,2.5 98,0.5 100,2.5 102,0.5 104,2.5 106,0.5 108,2.5 110,0.5 112,2.5 114,0.5 116,2.5 118,0.5 120,2.5 122,0.5 124,2.5 126,0.5 128,2.5 130,0.5 132,2.5 134,0.5 136,2.5 138,0.5 140,2.5 142,0.5 144,2.5 146,0.5 148,2.5 150,0.5 152,2.5 154,0.5 156,2.5 158,0.5 160,2.5 162,0.5 164,2.5 166,0.5 168,2.5 170,0.5 172,2.5" fill="none" stroke="#ff0000" stroke-width="1.15"/></svg>
<div class="t" style="top:966.83px;font-size:13.2px;left:625.20px;font-weight:700;white-space:pre;">t</div>
<svg class="r" style="left:625px;top:979px;overflow:visible" width="6" height="3"><polyline points="0,2.5 2,0.5 4,2.5" fill="none" stroke="#ff0000" stroke-width="1.15"/></svg>
<div class="t" style="top:949.03px;font-size:13.2px;right:1002.45px;font-weight:700;letter-spacing:-0.248px;white-space:pre;">TotalAmountExclI</div>
<svg class="r" style="left:808px;top:961px;overflow:visible" width="109" height="3"><polyline points="0,2.5 2,0.5 4,2.5 6,0.5 8,2.5 10,0.5 12,2.5 14,0.5 16,2.5 18,0.5 20,2.5 22,0.5 24,2.5 26,0.5 28,2.5 30,0.5 32,2.5 34,0.5 36,2.5 38,0.5 40,2.5 42,0.5 44,2.5 46,0.5 48,2.5 50,0.5 52,2.5 54,0.5 56,2.5 58,0.5 60,2.5 62,0.5 64,2.5 66,0.5 68,2.5 70,0.5 72,2.5 74,0.5 76,2.5 78,0.5 80,2.5 82,0.5 84,2.5 86,0.5 88,2.5 90,0.5 92,2.5 94,0.5 96,2.5 98,0.5 100,2.5 102,0.5 104,2.5 106,0.5 108,2.5" fill="none" stroke="#ff0000" stroke-width="1.15"/></svg>
<div class="t" style="top:966.83px;font-size:13.2px;right:1002.58px;font-weight:700;letter-spacing:-0.382px;white-space:pre;">nclVAT</div>
<svg class="r" style="left:874px;top:979px;overflow:visible" width="43" height="3"><polyline points="0,2.5 2,0.5 4,2.5 6,0.5 8,2.5 10,0.5 12,2.5 14,0.5 16,2.5 18,0.5 20,2.5 22,0.5 24,2.5 26,0.5 28,2.5 30,0.5 32,2.5 34,0.5 36,2.5 38,0.5 40,2.5 42,0.5" fill="none" stroke="#ff0000" stroke-width="1.15"/></svg>
<div class="r" style="left:625px;top:981px;width:291px;height:1px;background:#000;"></div>
<div class="t" style="top:243.78px;font-size:12.9px;left:1046.40px;font-weight:700;color:#7f7f7f;letter-spacing:0.007px;white-space:pre;">DocumentTitle_Lbl DocumentNo</div>
<svg class="r" style="left:1046px;top:256px;overflow:visible" width="117" height="3"><polyline points="0,2.5 2,0.5 4,2.5 6,0.5 8,2.5 10,0.5 12,2.5 14,0.5 16,2.5 18,0.5 20,2.5 22,0.5 24,2.5 26,0.5 28,2.5 30,0.5 32,2.5 34,0.5 36,2.5 38,0.5 40,2.5 42,0.5 44,2.5 46,0.5 48,2.5 50,0.5 52,2.5 54,0.5 56,2.5 58,0.5 60,2.5 62,0.5 64,2.5 66,0.5 68,2.5 70,0.5 72,2.5 74,0.5 76,2.5 78,0.5 80,2.5 82,0.5 84,2.5 86,0.5 88,2.5 90,0.5 92,2.5 94,0.5 96,2.5 98,0.5 100,2.5 102,0.5 104,2.5 106,0.5 108,2.5 110,0.5 112,2.5 114,0.5 116,2.5" fill="none" stroke="#ff0000" stroke-width="1.15"/></svg>
<svg class="r" style="left:1166px;top:256px;overflow:visible" width="81" height="3"><polyline points="0,2.5 2,0.5 4,2.5 6,0.5 8,2.5 10,0.5 12,2.5 14,0.5 16,2.5 18,0.5 20,2.5 22,0.5 24,2.5 26,0.5 28,2.5 30,0.5 32,2.5 34,0.5 36,2.5 38,0.5 40,2.5 42,0.5 44,2.5 46,0.5 48,2.5 50,0.5 52,2.5 54,0.5 56,2.5 58,0.5 60,2.5 62,0.5 64,2.5 66,0.5 68,2.5 70,0.5 72,2.5 74,0.5 76,2.5 78,0.5 80,2.5" fill="none" stroke="#ff0000" stroke-width="1.15"/></svg>
<div class="t" style="top:274.56px;font-size:13.4px;left:1046.40px;color:#7f7f7f;letter-spacing:0.012px;white-space:pre;">DocumentDate</div>
<svg class="r" style="left:1046px;top:287px;overflow:visible" width="91" height="3"><polyline points="0,2.5 2,0.5 4,2.5 6,0.5 8,2.5 10,0.5 12,2.5 14,0.5 16,2.5 18,0.5 20,2.5 22,0.5 24,2.5 26,0.5 28,2.5 30,0.5 32,2.5 34,0.5 36,2.5 38,0.5 40,2.5 42,0.5 44,2.5 46,0.5 48,2.5 50,0.5 52,2.5 54,0.5 56,2.5 58,0.5 60,2.5 62,0.5 64,2.5 66,0.5 68,2.5 70,0.5 72,2.5 74,0.5 76,2.5 78,0.5 80,2.5 82,0.5 84,2.5 86,0.5 88,2.5 90,0.5" fill="none" stroke="#ff0000" stroke-width="1.15"/></svg>
<div class="t" style="top:292.36px;font-size:13.4px;left:1046.40px;color:#7f7f7f;letter-spacing:-0.267px;white-space:pre;">Page_Lbl  2 / 2</div>
<svg class="r" style="left:1046px;top:305px;overflow:visible" width="56" height="3"><polyline points="0,2.5 2,0.5 4,2.5 6,0.5 8,2.5 10,0.5 12,2.5 14,0.5 16,2.5 18,0.5 20,2.5 22,0.5 24,2.5 26,0.5 28,2.5 30,0.5 32,2.5 34,0.5 36,2.5 38,0.5 40,2.5 42,0.5 44,2.5 46,0.5 48,2.5 50,0.5 52,2.5 54,0.5" fill="none" stroke="#ff0000" stroke-width="1.15"/></svg>
<div class="t" style="top:321.88px;font-size:12.9px;right:191.82px;font-weight:700;letter-spacing:-0.024px;white-space:pre;">RemainingAmountText</div>
<div class="t" style="top:351.60px;font-size:10.4px;left:1046.40px;font-weight:700;letter-spacing:-0.240px;white-space:pre;">VATClauses_Lbl</div>
<svg class="r" style="left:1046px;top:359px;overflow:visible" width="79" height="3"><polyline points="0,2.5 2,0.5 4,2.5 6,0.5 8,2.5 10,0.5 12,2.5 14,0.5 16,2.5 18,0.5 20,2.5 22,0.5 24,2.5 26,0.5 28,2.5 30,0.5 32,2.5 34,0.5 36,2.5 38,0.5 40,2.5 42,0.5 44,2.5 46,0.5 48,2.5 50,0.5 52,2.5 54,0.5 56,2.5 58,0.5 60,2.5 62,0.5 64,2.5 66,0.5 68,2.5 70,0.5 72,2.5 74,0.5 76,2.5 78,0.5" fill="none" stroke="#ff0000" stroke-width="1.15"/></svg>
<div class="t" style="top:377.40px;font-size:10.4px;left:1046.40px;font-weight:700;letter-spacing:0.191px;white-space:pre;">VATIdentifier_Lbl</div>
<svg class="r" style="left:1046px;top:385px;overflow:visible" width="89" height="3"><polyline points="0,2.5 2,0.5 4,2.5 6,0.5 8,2.5 10,0.5 12,2.5 14,0.5 16,2.5 18,0.5 20,2.5 22,0.5 24,2.5 26,0.5 28,2.5 30,0.5 32,2.5 34,0.5 36,2.5 38,0.5 40,2.5 42,0.5 44,2.5 46,0.5 48,2.5 50,0.5 52,2.5 54,0.5 56,2.5 58,0.5 60,2.5 62,0.5 64,2.5 66,0.5 68,2.5 70,0.5 72,2.5 74,0.5 76,2.5 78,0.5 80,2.5 82,0.5 84,2.5 86,0.5 88,2.5" fill="none" stroke="#ff0000" stroke-width="1.15"/></svg>
<div class="r" style="left:1046px;top:393px;width:680px;height:1px;background:#000;"></div>
<div class="t" style="top:397.07px;font-size:10.9px;left:1053.40px;letter-spacing:-0.010px;white-space:pre;">VATIdentifier_VATClauseLine</div>
<svg class="r" style="left:1053px;top:405px;overflow:visible" width="143" height="3"><polyline points="0,2.5 2,0.5 4,2.5 6,0.5 8,2.5 10,0.5 12,2.5 14,0.5 16,2.5 18,0.5 20,2.5 22,0.5 24,2.5 26,0.5 28,2.5 30,0.5 32,2.5 34,0.5 36,2.5 38,0.5 40,2.5 42,0.5 44,2.5 46,0.5 48,2.5 50,0.5 52,2.5 54,0.5 56,2.5 58,0.5 60,2.5 62,0.5 64,2.5 66,0.5 68,2.5 70,0.5 72,2.5 74,0.5 76,2.5 78,0.5 80,2.5 82,0.5 84,2.5 86,0.5 88,2.5 90,0.5 92,2.5 94,0.5 96,2.5 98,0.5 100,2.5 102,0.5 104,2.5 106,0.5 108,2.5 110,0.5 112,2.5 114,0.5 116,2.5 118,0.5 120,2.5 122,0.5 124,2.5 126,0.5 128,2.5 130,0.5 132,2.5 134,0.5 136,2.5 138,0.5 140,2.5 142,0.5" fill="none" stroke="#ff0000" stroke-width="1.15"/></svg>
<div class="t" style="top:397.07px;font-size:10.9px;left:1214.50px;letter-spacing:-0.100px;white-space:pre;">Description_VATClauseLine</div>
<svg class="r" style="left:1214px;top:405px;overflow:visible" width="134" height="3"><polyline points="0,2.5 2,0.5 4,2.5 6,0.5 8,2.5 10,0.5 12,2.5 14,0.5 16,2.5 18,0.5 20,2.5 22,0.5 24,2.5 26,0.5 28,2.5 30,0.5 32,2.5 34,0.5 36,2.5 38,0.5 40,2.5 42,0.5 44,2.5 46,0.5 48,2.5 50,0.5 52,2.5 54,0.5 56,2.5 58,0.5 60,2.5 62,0.5 64,2.5 66,0.5 68,2.5 70,0.5 72,2.5 74,0.5 76,2.5 78,0.5 80,2.5 82,0.5 84,2.5 86,0.5 88,2.5 90,0.5 92,2.5 94,0.5 96,2.5 98,0.5 100,2.5 102,0.5 104,2.5 106,0.5 108,2.5 110,0.5 112,2.5 114,0.5 116,2.5 118,0.5 120,2.5 122,0.5 124,2.5 126,0.5 128,2.5 130,0.5 132,2.5" fill="none" stroke="#ff0000" stroke-width="1.15"/></svg>
<div class="t" style="top:397.77px;font-size:10.9px;right:199.57px;letter-spacing:0.026px;white-space:pre;">VATAmount_VATClauseLin</div>
<svg class="r" style="left:1587px;top:406px;overflow:visible" width="132" height="3"><polyline points="0,2.5 2,0.5 4,2.5 6,0.5 8,2.5 10,0.5 12,2.5 14,0.5 16,2.5 18,0.5 20,2.5 22,0.5 24,2.5 26,0.5 28,2.5 30,0.5 32,2.5 34,0.5 36,2.5 38,0.5 40,2.5 42,0.5 44,2.5 46,0.5 48,2.5 50,0.5 52,2.5 54,0.5 56,2.5 58,0.5 60,2.5 62,0.5 64,2.5 66,0.5 68,2.5 70,0.5 72,2.5 74,0.5 76,2.5 78,0.5 80,2.5 82,0.5 84,2.5 86,0.5 88,2.5 90,0.5 92,2.5 94,0.5 96,2.5 98,0.5 100,2.5 102,0.5 104,2.5 106,0.5 108,2.5 110,0.5 112,2.5 114,0.5 116,2.5 118,0.5 120,2.5 122,0.5 124,2.5 126,0.5 128,2.5 130,0.5" fill="none" stroke="#ff0000" stroke-width="1.15"/></svg>
<div class="t" style="top:412.67px;font-size:10.9px;right:199.60px;white-space:pre;">e</div>
<svg class="r" style="left:1712px;top:421px;overflow:visible" width="7" height="3"><polyline points="0,2.5 2,0.5 4,2.5 6,0.5" fill="none" stroke="#ff0000" stroke-width="1.15"/></svg>
<div class="t" style="top:440.37px;font-size:10.9px;left:1214.50px;letter-spacing:-0.078px;white-space:pre;">Description2_VATClauseLine</div>
<div class="t" style="top:491.93px;font-size:13.2px;left:1053.40px;letter-spacing:-0.035px;white-space:pre;">LineFeeCaptionText</div>
<div class="r" style="left:1046px;top:546px;width:113px;height:113px;background:#e8effc;"></div>
<div class="r" style="left:1084px;top:591px;width:39px;height:39px;background:#969696;"></div>
<svg class="r" style="left:1084px;top:591px;" width="39" height="39" viewBox="0 0 39 39"><rect x="4.5" y="7.5" width="30" height="24" fill="#f7f7f7" stroke="#555" stroke-width="1.5"/><path d="M4.5 27 L13 19 L20 26" fill="none" stroke="#555" stroke-width="1.5"/><circle cx="28" cy="14" r="2" fill="#333"/><rect x="16.5" y="21.5" width="21" height="13" fill="#fff" stroke="#3a8fd6" stroke-width="1.5"/><path d="M27 35 V37.5 M23 37.8 H31" stroke="#3a8fd6" stroke-width="1.2"/></svg>
<div class="t" style="top:676.50px;font-size:13.35px;left:1046.40px;color:#0563c1;text-decoration:underline;text-underline-offset:1px;">PaymentServiceText_Url</div>
<div class="t" style="top:146.78px;font-size:11.6px;left:47.50px;color:#3b3a39;letter-spacing:0.044px;">Clipboard</div>
<div class="t" style="top:146.78px;font-size:11.6px;left:291.40px;color:#3b3a39;letter-spacing:0.030px;">Font</div>
<div class="t" style="top:147.08px;font-size:11.6px;left:548.50px;color:#3b3a39;letter-spacing:-0.296px;">Paragraph</div>
<div class="t" style="top:146.58px;font-size:11.6px;left:1098.50px;color:#3b3a39;letter-spacing:-0.758px;">Styles</div>
<div class="t" style="top:146.88px;font-size:11.6px;left:1560.30px;color:#3b3a39;letter-spacing:0.172px;">Editing</div>
<div class="t" style="top:146.88px;font-size:11.6px;left:1637.20px;color:#3b3a39;letter-spacing:-0.519px;">Voice</div>
<div class="t" style="top:146.88px;font-size:11.6px;left:1691.20px;color:#3b3a39;letter-spacing:-0.142px;">Sensitivity</div>
<div class="t" style="top:146.88px;font-size:11.6px;left:1767.70px;color:#3b3a39;letter-spacing:-0.000px;">Editor</div>
<div class="t" style="top:146.88px;font-size:11.6px;left:1815.30px;color:#3b3a39;letter-spacing:-0.504px;">Reuse Files</div>
<div class="r" style="left:162px;top:70px;width:1px;height:87px;background:#c8c6c4;"></div>
<div class="r" style="left:458px;top:70px;width:1px;height:87px;background:#c8c6c4;"></div>
<div class="r" style="left:705px;top:70px;width:1px;height:87px;background:#c8c6c4;"></div>
<div class="r" style="left:1534px;top:70px;width:1px;height:87px;background:#c8c6c4;"></div>
<div class="r" style="left:1621px;top:70px;width:1px;height:87px;background:#c8c6c4;"></div>
<div class="r" style="left:1679px;top:70px;width:1px;height:87px;background:#c8c6c4;"></div>
<div class="r" style="left:1753px;top:70px;width:1px;height:87px;background:#c8c6c4;"></div>
<div class="r" style="left:1811px;top:70px;width:1px;height:87px;background:#c8c6c4;"></div>
<div class="r" style="left:1875px;top:70px;width:1px;height:87px;background:#c8c6c4;"></div>
<svg class="r" style="left:151px;top:149px;" width="9" height="9" viewBox="0 0 9 9"><path d="M0.5 6 V0.5 H6" fill="none" stroke="#605e5c" stroke-width="1"/><path d="M3 3 L8 8 M4.5 8 H8 V4.5" fill="none" stroke="#605e5c" stroke-width="1"/></svg>
<svg class="r" style="left:447px;top:149px;" width="9" height="9" viewBox="0 0 9 9"><path d="M0.5 6 V0.5 H6" fill="none" stroke="#605e5c" stroke-width="1"/><path d="M3 3 L8 8 M4.5 8 H8 V4.5" fill="none" stroke="#605e5c" stroke-width="1"/></svg>
<svg class="r" style="left:694px;top:149px;" width="9" height="9" viewBox="0 0 9 9"><path d="M0.5 6 V0.5 H6" fill="none" stroke="#605e5c" stroke-width="1"/><path d="M3 3 L8 8 M4.5 8 H8 V4.5" fill="none" stroke="#605e5c" stroke-width="1"/></svg>
<svg class="r" style="left:1523px;top:149px;" width="9" height="9" viewBox="0 0 9 9"><path d="M0.5 6 V0.5 H6" fill="none" stroke="#605e5c" stroke-width="1"/><path d="M3 3 L8 8 M4.5 8 H8 V4.5" fill="none" stroke="#605e5c" stroke-width="1"/></svg>
<svg class="r" style="left:1898px;top:150px;" width="12" height="8" viewBox="0 0 12 8"><path d="M1 6.5 L6 1.5 L11 6.5" fill="none" stroke="#444" stroke-width="1.2"/></svg>
<div class="t" style="top:108.18px;font-size:11.6px;left:13.20px;color:#262626;letter-spacing:-0.415px;">Paste</div>
<svg class="r" style="left:23.2px;top:127.5px;" width="8" height="5" viewBox="0 0 8 5"><path d="M1 1 L4.0 4 L7 1" fill="none" stroke="#444" stroke-width="1.1"/></svg>
<div class="t" style="top:75.38px;font-size:11.6px;left:70.30px;color:#a19f9d;letter-spacing:0.175px;">Cut</div>
<div class="t" style="top:99.38px;font-size:11.6px;left:70.30px;color:#a19f9d;letter-spacing:0.140px;">Copy</div>
<div class="t" style="top:123.28px;font-size:11.6px;left:70.30px;color:#262626;letter-spacing:0.076px;">Format Painter</div>
<svg class="r" style="left:13px;top:71px;" width="34" height="34" viewBox="0 0 34 34"><rect x="3.6" y="6.1" width="20.4" height="23.4" fill="#f9f9f9" stroke="#e8891d" stroke-width="1.3"/><rect x="5" y="7.5" width="17.6" height="20.6" fill="none" stroke="#fde4a0" stroke-width="1"/><path d="M7.6 9.3 V5.8 H10.8 A3.3 3.3 0 0 1 17.2 5.8 H20.4 V9.3 Z" fill="#f9f9f9" stroke="#505050" stroke-width="1.1"/><rect x="16.6" y="14.6" width="13" height="17" fill="#fafafa" stroke="#323130" stroke-width="1.3"/></svg>
<svg class="r" style="left:53px;top:71px;" width="12" height="19" viewBox="0 0 12 19"><path d="M3.5 1 Q4 5 6 8.2 L8.6 13.2 M8.6 1 Q8 5 6 8.2 L3.4 13.2" fill="none" stroke="#8f8d8b" stroke-width="1.1"/><circle cx="3" cy="14.8" r="1.7" fill="none" stroke="#8f8d8b" stroke-width="1.1"/><circle cx="8.9" cy="14.8" r="1.7" fill="none" stroke="#8f8d8b" stroke-width="1.1"/></svg>
<svg class="r" style="left:50px;top:96px;" width="18" height="17" viewBox="0 0 18 17"><path d="M6 13.5 H1.6 V0.6 H7.6 L8.6 1.6" fill="#efefef" stroke="#8f8d8b" stroke-width="1.1"/><path d="M7.6 3.6 H12.6 L16.6 7.6 V15.6 H7.6 Z" fill="#f4f4f4" stroke="#8f8d8b" stroke-width="1.1"/><path d="M12.6 3.6 V7.6 H16.6" fill="none" stroke="#8f8d8b" stroke-width="1.1"/><path d="M10.2 10.5 H14 M10.2 12.5 H14" stroke="#8f8d8b" stroke-width="0.9"/></svg>
<svg class="r" style="left:50px;top:119px;" width="18" height="18" viewBox="0 0 18 18"><path d="M1.3 10.8 L7 7.2 L10.6 11 L7.2 16.5 Z" fill="#fbd9a6" stroke="#e46c0a" stroke-width="1.3" stroke-linejoin="round"/><path d="M3.5 11 L7.8 13.5" stroke="#e46c0a" stroke-width="1"/><path d="M7 7.2 L9.2 5.2 L12.6 8.8 L10.6 11 Z" fill="#fff" stroke="#323130" stroke-width="1.2"/><path d="M10.2 6.2 L14.8 1.6 L17 3.8 L12.4 8.4" fill="#fff" stroke="#323130" stroke-width="1.2"/></svg>
<div class="r" style="left:171px;top:77px;width:111px;height:23px;background:#ffffff;box-sizing:border-box;border:1px solid #c8c6c4"></div>
<div class="t" style="top:83.08px;font-size:11.6px;left:174.30px;color:#262626;letter-spacing:0.057px;">Calibri (Body)</div>
<svg class="r" style="left:271.5px;top:87px;" width="8" height="5" viewBox="0 0 8 5"><path d="M1 1 L4.0 4 L7 1" fill="none" stroke="#323130" stroke-width="1.1"/></svg>
<div class="r" style="left:284px;top:77px;width:43px;height:23px;background:#ffffff;box-sizing:border-box;border:1px solid #c8c6c4"></div>
<div class="t" style="top:83.08px;font-size:11.6px;left:287.00px;color:#262626;letter-spacing:-1.040px;">11</div>
<svg class="r" style="left:316.5px;top:87px;" width="8" height="5" viewBox="0 0 8 5"><path d="M1 1 L4.0 4 L7 1" fill="none" stroke="#323130" stroke-width="1.1"/></svg>
<svg class="r" style="left:325px;top:70px;" width="135" height="35" viewBox="0 0 135 35"><path d="M8.6 22.6 L13.600000000000001 10.5 L18.6 22.6 M10.80 18.97 H16.40" fill="none" stroke="#323130" stroke-width="1.25"/><path d="M18.3 14 L20.5 11.8 L22.7 14" fill="none" stroke="#2b88d8" stroke-width="1.2"/><path d="M34.3 22.6 L38.05 13.5 L41.8 22.6 M35.95 19.87 H40.15" fill="none" stroke="#323130" stroke-width="1.25"/><path d="M42.3 11.3 L44.5 13.5 L46.7 11.3" fill="none" stroke="#2b88d8" stroke-width="1.2"/><path d="M62.8 22.6 L66.4 13.5 L70 22.6 M64.38 19.87 H68.42" fill="none" stroke="#323130" stroke-width="1.25"/><path d="M73 17.5 Q73 15 75.2 15 Q77.6 15 77.6 17.5 V22.6 M77.6 19.2 Q73 18.8 73 21 Q73 22.7 75 22.7 Q77 22.7 77.6 20.8" fill="none" stroke="#323130" stroke-width="1.2"/><path d="M83 17.3 L85.8 20 L88.6 17.3" fill="none" stroke="#323130" stroke-width="1.1"/><path d="M107.5 22.6 L111.5 10.5 L115.5 22.6 M109.26 18.97 H113.74" fill="none" stroke="#323130" stroke-width="1.25"/><path d="M113.8 21.2 L118.5 16.4 L122.6 20.5 L117.9 25.3 Z" fill="#fff" stroke="#a64ac9" stroke-width="1.3"/><path d="M116.2 18.9 L120.2 23" stroke="#a64ac9" stroke-width="1"/></svg>
<div class="r" style="left:379px;top:78px;width:1px;height:21px;background:#c8c6c4;"></div>
<div class="r" style="left:424px;top:78px;width:1px;height:21px;background:#c8c6c4;"></div>
<div class="r" style="left:171px;top:109px;width:22px;height:23px;background:#c8c6c4;box-sizing:border-box;border:1px solid #8a8886"></div>
<svg class="r" style="left:171px;top:109px;" width="22" height="23" viewBox="0 0 22 23"><text x="6.2" y="16.5" font-family="Liberation Sans" font-size="14" font-weight="700" fill="#201f1e">B</text></svg>
<svg class="r" style="left:200px;top:109px;" width="14" height="23" viewBox="0 0 14 23"><text x="3" y="16" font-family="Liberation Serif" font-style="italic" font-size="15" fill="#323130">I</text></svg>
<svg class="r" style="left:222px;top:109px;" width="14" height="23" viewBox="0 0 14 23"><text x="2" y="14.5" font-family="Liberation Sans" font-size="13" fill="#323130">U</text><path d="M2.8 17.5 H11.8" stroke="#323130" stroke-width="1"/></svg>
<svg class="r" style="left:243.5px;top:118px;" width="8" height="5" viewBox="0 0 8 5"><path d="M1 1 L4.0 4 L7 1" fill="none" stroke="#605e5c" stroke-width="1"/></svg>
<svg class="r" style="left:258px;top:109px;" width="21" height="23" viewBox="0 0 21 23"><text x="3" y="15" font-family="Liberation Sans" font-size="12.5" fill="#605e5c">ab</text><path d="M1.5 11.5 H19" stroke="#323130" stroke-width="1"/></svg>
<svg class="r" style="left:287px;top:109px;" width="16" height="23" viewBox="0 0 16 23"><text x="1.5" y="15" font-family="Liberation Sans" font-size="13" font-weight="700" fill="#3b3a39">x</text><text x="9.5" y="18.5" font-family="Liberation Sans" font-size="7" font-weight="700" fill="#2b88d8">2</text></svg>
<svg class="r" style="left:311px;top:109px;" width="16" height="23" viewBox="0 0 16 23"><text x="1.5" y="15" font-family="Liberation Sans" font-size="13" font-weight="700" fill="#3b3a39">x</text><text x="9.5" y="7.5" font-family="Liberation Sans" font-size="7" font-weight="700" fill="#2b88d8">2</text></svg>
<div class="r" style="left:332px;top:110px;width:1px;height:21px;background:#c8c6c4;"></div>
<svg class="r" style="left:325px;top:105px;" width="135" height="30" viewBox="0 0 135 30"><path d="M17 20.5 L22.6 8.8 L28.4 20.5 M19.6 16.3 H25.6" fill="none" stroke="#1f7ad1" stroke-width="3.3" stroke-linejoin="miter" stroke-linecap="square"/><path d="M17 20.5 L22.6 8.8 L28.4 20.5 M19.6 16.3 H25.6" fill="none" stroke="#fff" stroke-width="1.1" stroke-linejoin="miter"/><path d="M56.6 15.8 L63.5 8.2 A1.5 1.5 0 0 1 66 8.5 L67.3 9.8 A1.5 1.5 0 0 1 67.4 12 L60.4 19.5 Z" fill="#fff" stroke="#323130" stroke-width="1.2"/><path d="M56.6 15.8 L54.5 18 H58.8 L60.4 19.5" fill="#777" stroke="#555" stroke-width="0.8"/><path d="M96 17.5 L100.5 7.2 L105 17.5 M97.98 14.41 H103.02" fill="none" stroke="#323130" stroke-width="1.3"/></svg>
<div class="r" style="left:378px;top:124px;width:16px;height:4px;background:#ffff00;"></div>
<div class="r" style="left:417px;top:124px;width:16px;height:4px;background:#ff0000;"></div>
<svg class="r" style="left:360.5px;top:118.5px;" width="8" height="5" viewBox="0 0 8 5"><path d="M1 1 L4.0 4 L7 1" fill="none" stroke="#323130" stroke-width="1.1"/></svg>
<svg class="r" style="left:399.5px;top:118.5px;" width="8" height="5" viewBox="0 0 8 5"><path d="M1 1 L4.0 4 L7 1" fill="none" stroke="#323130" stroke-width="1.1"/></svg>
<svg class="r" style="left:438.5px;top:118.5px;" width="8" height="5" viewBox="0 0 8 5"><path d="M1 1 L4.0 4 L7 1" fill="none" stroke="#323130" stroke-width="1.1"/></svg>
<svg class="r" style="left:468px;top:78px;" width="20" height="19" viewBox="0 0 20 19"><rect x="2" y="2" width="3" height="3" fill="#1e7bd4"/><rect x="2" y="8" width="3" height="3" fill="#1e7bd4"/><rect x="2" y="14" width="3" height="3" fill="#1e7bd4"/><path d="M7 3.5 H17 M7 9.5 H17 M7 15.5 H17" stroke="#323130" stroke-width="1"/></svg>
<svg class="r" style="left:491.5px;top:87px;" width="8" height="5" viewBox="0 0 8 5"><path d="M1 1 L4.0 4 L7 1" fill="none" stroke="#323130" stroke-width="1.1"/></svg>
<svg class="r" style="left:506px;top:78px;" width="20" height="19" viewBox="0 0 20 19"><text x="2.5" y="7" font-family="Liberation Sans" font-size="6.5" font-weight="700" fill="#1e7bd4">1</text><text x="2.3" y="13" font-family="Liberation Sans" font-size="6.5" font-weight="700" fill="#1e7bd4">2</text><text x="2.3" y="19" font-family="Liberation Sans" font-size="6.5" font-weight="700" fill="#1e7bd4">3</text><path d="M8 3.5 H18 M8 9.5 H18 M8 15.5 H18" stroke="#323130" stroke-width="1"/></svg>
<svg class="r" style="left:530.5px;top:87px;" width="8" height="5" viewBox="0 0 8 5"><path d="M1 1 L4.0 4 L7 1" fill="none" stroke="#323130" stroke-width="1.1"/></svg>
<svg class="r" style="left:546px;top:78px;" width="20" height="19" viewBox="0 0 20 19"><text x="1.5" y="7" font-family="Liberation Sans" font-size="6.5" font-weight="700" fill="#1e7bd4">1</text><text x="3.5" y="13" font-family="Liberation Sans" font-size="6.5" font-weight="700" fill="#1e7bd4">a</text><text x="6.5" y="19" font-family="Liberation Sans" font-size="6.5" font-weight="700" fill="#1e7bd4">i</text><path d="M7 3.5 H17 M10 9.5 H17 M11 15.5 H17" stroke="#323130" stroke-width="1"/></svg>
<svg class="r" style="left:567.5px;top:87px;" width="8" height="5" viewBox="0 0 8 5"><path d="M1 1 L4.0 4 L7 1" fill="none" stroke="#323130" stroke-width="1.1"/></svg>
<div class="r" style="left:585px;top:78px;width:1px;height:20px;background:#c8c6c4;"></div>
<svg class="r" style="left:592px;top:78px;" width="18" height="19" viewBox="0 0 18 19"><path d="M2 3.5 H16.5 M9.5 7.5 H16.5 M9.5 11.5 H16.5 M2 15.5 H16.5" stroke="#323130" stroke-width="1"/><path d="M7.5 9.5 H2.5 M5 7 L2.5 9.5 L5 12" fill="none" stroke="#1e7bd4" stroke-width="1.3"/></svg>
<svg class="r" style="left:616px;top:78px;" width="18" height="19" viewBox="0 0 18 19"><path d="M1.5 3.5 H16.5 M9.5 7.5 H16.5 M9.5 11.5 H16.5 M1.5 15.5 H16.5" stroke="#323130" stroke-width="1"/><path d="M1.5 9.5 H6.8 M4.6 7 L7.1 9.5 L4.6 12" fill="none" stroke="#1e7bd4" stroke-width="1.3"/></svg>
<div class="r" style="left:640px;top:78px;width:1px;height:20px;background:#c8c6c4;"></div>
<svg class="r" style="left:646px;top:78px;" width="20" height="19" viewBox="0 0 20 19"><path d="M2 8.5 L4.8 1.8 L7.6 8.5 M3 6.3 H6.6" fill="none" stroke="#1e7bd4" stroke-width="1.2"/><path d="M2 10.5 H7.6 L2 17.3 H7.8" fill="none" stroke="#323130" stroke-width="1.2"/><path d="M14.5 1.8 V17 M11.2 13.7 L14.5 17 L17.8 13.7" fill="none" stroke="#323130" stroke-width="1.2"/></svg>
<div class="r" style="left:671px;top:78px;width:1px;height:20px;background:#c8c6c4;"></div>
<svg class="r" style="left:679px;top:80px;" width="16" height="16" viewBox="0 0 16 16"><path d="M7.5 1.5 H13.5 M8.5 2 V14 M11.5 2 V14" stroke="#323130" stroke-width="1.6"/><path d="M8.5 1.5 A3.3 3.3 0 0 0 8.5 8.1 Z" fill="#323130" stroke="#323130" stroke-width="1"/></svg>
<div class="r" style="left:467px;top:109px;width:23px;height:23px;background:#c8c6c4;box-sizing:border-box;border:1px solid #8a8886"></div>
<svg class="r" style="left:467px;top:109px;" width="23" height="23" viewBox="0 0 23 23"><path d="M3.5 4.5 H18 M3.5 8.5 H14 M3.5 12.5 H18 M3.5 16.5 H14" stroke="#323130" stroke-width="1"/></svg>
<svg class="r" style="left:492px;top:109px;" width="20" height="23" viewBox="0 0 20 23"><path d="M2.5 4.5 H17 M4.8 8.5 H14.8 M2.5 12.5 H17 M4.8 16.5 H14.8" stroke="#323130" stroke-width="1"/></svg>
<svg class="r" style="left:516px;top:109px;" width="20" height="23" viewBox="0 0 20 23"><path d="M2.5 4.5 H17 M6.5 8.5 H17 M2.5 12.5 H17 M6.5 16.5 H17" stroke="#323130" stroke-width="1"/></svg>
<svg class="r" style="left:540px;top:109px;" width="20" height="23" viewBox="0 0 20 23"><path d="M2.5 4.5 H17.3 M2.5 8.5 H17.3 M2.5 12.5 H17.3 M2.5 16.5 H17.3" stroke="#323130" stroke-width="1"/></svg>
<div class="r" style="left:565px;top:110px;width:1px;height:21px;background:#c8c6c4;"></div>
<svg class="r" style="left:571px;top:109px;" width="22" height="23" viewBox="0 0 22 23"><path d="M4.5 3.5 V18 M2.2 5.8 L4.5 3.5 L6.8 5.8 M2.2 15.7 L4.5 18 L6.8 15.7" fill="none" stroke="#1e7bd4" stroke-width="1.2"/><path d="M9 4.5 H18.5 M9 8.5 H18.5 M9 12.5 H18.5 M9 16.5 H18.5" stroke="#323130" stroke-width="1"/></svg>
<svg class="r" style="left:592.5px;top:118.5px;" width="8" height="5" viewBox="0 0 8 5"><path d="M1 1 L4.0 4 L7 1" fill="none" stroke="#323130" stroke-width="1.1"/></svg>
<div class="r" style="left:610px;top:110px;width:1px;height:21px;background:#c8c6c4;"></div>
<svg class="r" style="left:616px;top:109px;" width="20" height="22" viewBox="0 0 20 22"><path d="M3.5 9 L8.5 4 L13 8.5 L8.5 13 Q6.5 14.5 4.5 12.5 Q2.5 10.5 3.5 9 Z" fill="#fff" stroke="#323130" stroke-width="1.1"/><path d="M6 2 V6.5" stroke="#323130" stroke-width="1.1"/><path d="M12.5 4.5 Q15 4 15.5 8.5" fill="none" stroke="#1e7bd4" stroke-width="1.5"/><rect x="2.5" y="15.5" width="15" height="3" fill="#fff" stroke="#a19f9d" stroke-width="1"/></svg>
<svg class="r" style="left:639.5px;top:118.5px;" width="8" height="5" viewBox="0 0 8 5"><path d="M1 1 L4.0 4 L7 1" fill="none" stroke="#323130" stroke-width="1.1"/></svg>
<svg class="r" style="left:656px;top:110px;" width="18" height="19" viewBox="0 0 18 19"><rect x="1" y="2" width="1" height="1" fill="#323130"/><rect x="1" y="9" width="1" height="1" fill="#323130"/><rect x="3" y="2" width="1" height="1" fill="#323130"/><rect x="3" y="9" width="1" height="1" fill="#323130"/><rect x="5" y="2" width="1" height="1" fill="#323130"/><rect x="5" y="9" width="1" height="1" fill="#323130"/><rect x="7" y="2" width="1" height="1" fill="#323130"/><rect x="7" y="9" width="1" height="1" fill="#323130"/><rect x="9" y="2" width="1" height="1" fill="#323130"/><rect x="9" y="9" width="1" height="1" fill="#323130"/><rect x="11" y="2" width="1" height="1" fill="#323130"/><rect x="11" y="9" width="1" height="1" fill="#323130"/><rect x="13" y="2" width="1" height="1" fill="#323130"/><rect x="13" y="9" width="1" height="1" fill="#323130"/><rect x="15" y="2" width="1" height="1" fill="#323130"/><rect x="15" y="9" width="1" height="1" fill="#323130"/><rect x="1" y="2" width="1" height="1" fill="#323130"/><rect x="1" y="4" width="1" height="1" fill="#323130"/><rect x="1" y="6" width="1" height="1" fill="#323130"/><rect x="1" y="8" width="1" height="1" fill="#323130"/><rect x="1" y="10" width="1" height="1" fill="#323130"/><rect x="1" y="12" width="1" height="1" fill="#323130"/><rect x="1" y="14" width="1" height="1" fill="#323130"/><rect x="8" y="2" width="1" height="1" fill="#323130"/><rect x="8" y="4" width="1" height="1" fill="#323130"/><rect x="8" y="6" width="1" height="1" fill="#323130"/><rect x="8" y="8" width="1" height="1" fill="#323130"/><rect x="8" y="10" width="1" height="1" fill="#323130"/><rect x="8" y="12" width="1" height="1" fill="#323130"/><rect x="8" y="14" width="1" height="1" fill="#323130"/><rect x="15" y="2" width="1" height="1" fill="#323130"/><rect x="15" y="4" width="1" height="1" fill="#323130"/><rect x="15" y="6" width="1" height="1" fill="#323130"/><rect x="15" y="8" width="1" height="1" fill="#323130"/><rect x="15" y="10" width="1" height="1" fill="#323130"/><rect x="15" y="12" width="1" height="1" fill="#323130"/><rect x="15" y="14" width="1" height="1" fill="#323130"/><rect x="1" y="16" width="15" height="1.2" fill="#323130"/></svg>
<svg class="r" style="left:678.5px;top:118.5px;" width="8" height="5" viewBox="0 0 8 5"><path d="M1 1 L4.0 4 L7 1" fill="none" stroke="#323130" stroke-width="1.1"/></svg>
<div class="r" style="left:715px;top:71px;width:810px;height:60px;background:#ffffff;box-sizing:border-box;border:1px solid #d2d0ce"></div>
<div class="r" style="left:860px;top:73px;width:72px;height:56px;background:#ffffff;box-sizing:border-box;border:1px solid #8a8886;box-shadow:inset 0 0 0 3px #c8c6c4"></div>
<div class="r" style="left:722.8px;top:76px;width:58.5px;height:30px;overflow:hidden"><div class="t" style="left:0px;top:11.74px;font-size:12.0px;color:#000;">AaBbCcDdEe</div></div>
<div class="r" style="left:794.7px;top:76px;width:58.299999999999955px;height:30px;overflow:hidden"><div class="t" style="left:0px;top:11.74px;font-size:12.0px;color:#0f6fc6;text-decoration:underline;text-underline-offset:2px;">AaBbCcDdEe</div></div>
<div class="r" style="left:866.3px;top:76px;width:58.90000000000009px;height:30px;overflow:hidden"><div class="t" style="left:0px;top:11.74px;font-size:12.0px;color:#000;">AaBbCcDdEe</div></div>
<div class="r" style="left:938.7px;top:76px;width:58.299999999999955px;height:30px;overflow:hidden"><div class="t" style="left:0px;top:12.20px;font-size:10.4px;color:#000;font-weight:700;">AaBbCcDdEe</div></div>
<div class="r" style="left:1010.4px;top:76px;width:58.30000000000007px;height:30px;overflow:hidden"><div class="t" style="left:0px;top:11.52px;font-size:11.2px;color:#000;-webkit-text-stroke:0.35px #000;">AaBbCcDdEe</div></div>
<div class="r" style="left:1082.6px;top:76px;width:58.40000000000009px;height:30px;overflow:hidden"><div class="t" style="left:0px;top:11.04px;font-size:12.6px;color:#2f72c0;">AaBbCcDdEe</div></div>
<div class="r" style="left:1155.0px;top:76px;width:58.0px;height:30px;overflow:hidden"><div class="t" style="left:0px;top:12.01px;font-size:11.8px;color:#2f72c0;font-style:italic;">AaBbCcDdEe</div></div>
<div class="r" style="left:1227.2px;top:76px;width:57.799999999999955px;height:30px;overflow:hidden"><div class="t" style="left:0px;top:6.33px;font-size:20.4px;color:#000;">AaBbCcDd</div></div>
<div class="r" style="left:1299.0px;top:76px;width:58.0px;height:30px;overflow:hidden"><div class="t" style="left:0px;top:12.01px;font-size:11.8px;color:#000;">AaBbCcDdEe</div></div>
<div class="r" style="left:1370.9px;top:76px;width:57.899999999999864px;height:30px;overflow:hidden"><div class="t" style="left:0px;top:12.01px;font-size:11.8px;color:#404040;font-style:italic;">AaBbCcDdEe</div></div>
<div class="r" style="left:1442.8px;top:76px;width:58.0px;height:30px;overflow:hidden"><div class="t" style="left:0px;top:12.01px;font-size:11.8px;color:#000;font-style:italic;">AaBbCcDdEe</div></div>
<div class="t" style="top:111.78px;font-size:11.6px;left:727.50px;color:#444444;letter-spacing:0.195px;">¶ Normal</div>
<div class="t" style="top:111.78px;font-size:11.6px;left:808.00px;color:#444444;letter-spacing:-0.348px;">Style1</div>
<div class="t" style="top:111.78px;font-size:11.6px;left:865.40px;color:#444444;letter-spacing:-0.237px;">¶ No Spac...</div>
<div class="t" style="top:111.78px;font-size:11.6px;left:941.40px;color:#444444;letter-spacing:0.002px;">Heading 1</div>
<div class="t" style="top:111.78px;font-size:11.6px;left:1013.30px;color:#444444;letter-spacing:0.090px;">Heading 2</div>
<div class="t" style="top:111.78px;font-size:11.6px;left:1085.50px;color:#444444;letter-spacing:0.090px;">Heading 3</div>
<div class="t" style="top:111.78px;font-size:11.6px;left:1157.70px;color:#444444;letter-spacing:0.040px;">Heading 4</div>
<div class="t" style="top:111.78px;font-size:11.6px;left:1245.30px;color:#444444;letter-spacing:0.104px;">Title</div>
<div class="t" style="top:111.78px;font-size:11.6px;left:1307.90px;color:#444444;letter-spacing:0.216px;">Subtitle</div>
<div class="t" style="top:111.78px;font-size:11.6px;left:1369.00px;color:#444444;letter-spacing:-0.153px;">Subtle Em...</div>
<div class="t" style="top:111.78px;font-size:11.6px;left:1447.20px;color:#444444;letter-spacing:-0.161px;">Emphasis</div>
<div class="r" style="left:1509px;top:72px;width:15px;height:19px;background:#f3f2f1;box-sizing:border-box;border:1px solid #e1dfdd"></div>
<svg class="r" style="left:1509px;top:72px;" width="15" height="19" viewBox="0 0 15 19"><path d="M4.5 11 L7.5 8 L10.5 11" fill="none" stroke="#c8c6c4" stroke-width="1"/></svg>
<div class="r" style="left:1509px;top:92px;width:15px;height:18px;background:#f3f2f1;box-sizing:border-box;border:1px solid #c8c6c4"></div>
<svg class="r" style="left:1509px;top:92px;" width="15" height="18" viewBox="0 0 15 18"><path d="M4.5 7.5 L7.5 10.5 L10.5 7.5" fill="none" stroke="#323130" stroke-width="1.1"/></svg>
<div class="r" style="left:1509px;top:111px;width:15px;height:19px;background:#f3f2f1;box-sizing:border-box;border:1px solid #c8c6c4"></div>
<svg class="r" style="left:1509px;top:111px;" width="15" height="19" viewBox="0 0 15 19"><path d="M4 6.5 H11" stroke="#323130" stroke-width="1"/><path d="M4.5 9.5 L7.5 12.5 L10.5 9.5" fill="none" stroke="#323130" stroke-width="1.1"/></svg>
<div class="t" style="top:74.08px;font-size:11.6px;left:1565.40px;color:#262626;letter-spacing:-0.088px;">Find</div>
<svg class="r" style="left:1597.5px;top:78px;" width="8" height="5" viewBox="0 0 8 5"><path d="M1 1 L4.0 4 L7 1" fill="none" stroke="#323130" stroke-width="1.1"/></svg>
<div class="t" style="top:97.08px;font-size:11.6px;left:1565.40px;color:#262626;letter-spacing:-0.276px;">Replace</div>
<div class="t" style="top:119.98px;font-size:11.6px;left:1565.40px;color:#262626;letter-spacing:-0.388px;">Select</div>
<svg class="r" style="left:1598.5px;top:124px;" width="8" height="5" viewBox="0 0 8 5"><path d="M1 1 L4.0 4 L7 1" fill="none" stroke="#323130" stroke-width="1.1"/></svg>
<svg class="r" style="left:1546px;top:71px;" width="17" height="17" viewBox="0 0 17 17"><circle cx="10.5" cy="6" r="4.6" fill="#fafafa" stroke="#323130" stroke-width="1.2"/><path d="M7.2 9.3 L1.5 15" stroke="#323130" stroke-width="1.4"/></svg>
<svg class="r" style="left:1544px;top:92px;" width="18" height="20" viewBox="0 0 18 20"><path d="M8.3 2.2 V10 M8.3 7.2 Q8.5 5.3 10.3 5.3 Q12.6 5.3 12.6 7.8 Q12.6 10.2 10.3 10.2 Q8.5 10.2 8.3 8.3" fill="none" stroke="#a64ac9" stroke-width="1.2"/><path d="M16.2 12.9 Q15.6 12.1 14.4 12.1 Q12.4 12.1 12.4 14.8 Q12.4 17.5 14.4 17.5 Q15.6 17.5 16.2 16.7" fill="none" stroke="#2b88d8" stroke-width="1.2"/><path d="M4.6 7 Q2.2 9.5 2.6 12 Q3.2 14.6 6.5 14.6 H10" fill="none" stroke="#2b88d8" stroke-width="1.2"/><path d="M7.6 12.2 L10 14.6 L7.6 17" fill="none" stroke="#2b88d8" stroke-width="1.2"/></svg>
<svg class="r" style="left:1546px;top:117px;" width="14" height="17" viewBox="0 0 14 17"><path d="M2.5 1.5 V13.5 L5.5 10.5 L8 15.5 L10 14.5 L7.5 9.8 H11.5 Z" fill="#fff" stroke="#323130" stroke-width="1.1" stroke-linejoin="round"/></svg>
<svg class="r" style="left:1638px;top:70px;" width="26" height="34" viewBox="0 0 26 34"><rect x="7.3" y="1.8" width="10.6" height="20.5" rx="5.3" fill="#7fb8ea" stroke="#2b88d8" stroke-width="1.3"/><path d="M3.8 16 A8.8 8.8 0 0 0 21.4 16" fill="none" stroke="#323130" stroke-width="1.3"/><path d="M12.6 25 V30" stroke="#323130" stroke-width="1.3"/></svg>
<div class="t" style="top:107.88px;font-size:11.6px;left:1632.20px;color:#262626;letter-spacing:0.150px;">Dictate</div>
<svg class="r" style="left:1703px;top:70px;" width="32" height="33" viewBox="0 0 32 33"><path d="M3.5 30 V3.5 H14.5" fill="none" stroke="#b4b4b4" stroke-width="1.3"/><rect x="4.2" y="4.2" width="19" height="25.2" fill="#efefef"/><path d="M3.5 30.2 H23.6 V18.5" fill="none" stroke="#b4b4b4" stroke-width="1.3"/><g transform="rotate(45 13.7 17.7)"><rect x="7.7" y="15" width="12" height="5.4" fill="#f4f4f4" stroke="#b4b4b4" stroke-width="1.2"/><path d="M9.7 17.7 H17.7" stroke="#b4b4b4" stroke-width="1.6"/></g><g transform="rotate(45 21.8 8.9)"><rect x="14.3" y="5.9" width="15" height="6" fill="#f4f4f4" stroke="#b4b4b4" stroke-width="1.2"/><rect x="14.3" y="10.4" width="15" height="2.2" fill="#b4b4b4"/></g><g transform="rotate(45 25.5 4.8)"><rect x="22.5" y="2.3" width="6" height="5" fill="#f4f4f4" stroke="#b4b4b4" stroke-width="1.2"/></g></svg>
<div class="t" style="top:107.88px;font-size:11.6px;left:1690.40px;color:#a19f9d;letter-spacing:0.018px;">Sensitivity</div>
<svg class="r" style="left:1712.5px;top:127px;" width="8" height="5" viewBox="0 0 8 5"><path d="M1 1 L4.0 4 L7 1" fill="none" stroke="#a19f9d" stroke-width="1"/></svg>
<svg class="r" style="left:1766px;top:70px;" width="34" height="34" viewBox="0 0 34 34"><path d="M16 10 H29.6 A2.3 2.3 0 0 1 29.6 14.6 H13 Z" fill="#185abd"/><path d="M11 17.5 H24.8 A2.15 2.15 0 0 1 24.8 21.8 H8 Z" fill="#185abd"/><path d="M6 24.2 H19.8 A2.3 2.3 0 0 1 19.8 28.8 H3 Z" fill="#185abd"/><path d="M20.5 1.96 L25.1 5.24 L7.07 30.04 L1.8 32.2 L2.53 26.76 Z" fill="#fafafa" stroke="#185abd" stroke-width="1.25" stroke-linejoin="round"/><path d="M20.5 1.96 L25.1 5.24 L23.3 7.7 L18.7 4.4 Z" fill="#185abd"/><path d="M1.8 32.2 L2.3 28.5 L5.3 30.7 Z" fill="#185abd"/></svg>
<div class="t" style="top:107.88px;font-size:11.6px;left:1767.70px;color:#262626;letter-spacing:-0.000px;">Editor</div>
<svg class="r" style="left:1826px;top:72px;" width="38" height="34" viewBox="0 0 38 34"><path d="M4.5 25 V4.5 H30.5" fill="none" stroke="#323130" stroke-width="1.1"/><path d="M7 26 V7 H32.5 V25" fill="none" stroke="#323130" stroke-width="1.1"/><path d="M9.8 26 H16 M9.8 26.5 V9.8 H31.8 V25" fill="#f7f7f7" stroke="#323130" stroke-width="1.1"/><rect x="10.4" y="10.4" width="20.8" height="15" fill="#f7f7f7"/><circle cx="22.7" cy="19.4" r="6.3" fill="#f7f7f7" stroke="#2b88d8" stroke-width="1.3"/><path d="M27.2 23.9 L34 30.6" stroke="#2b88d8" stroke-width="1.4"/></svg>
<div class="t" style="top:107.88px;font-size:11.6px;left:1828.40px;color:#262626;letter-spacing:-0.682px;">Reuse</div>
<div class="t" style="top:123.98px;font-size:11.6px;left:1832.40px;color:#262626;letter-spacing:-0.548px;">Files</div>
<div class="r" style="left:1px;top:162px;width:18px;height:20px;background:#dcdcdc;"></div>
<div class="r" style="left:2px;top:166px;width:14px;height:14px;background:#ffffff;"></div>
<svg class="r" style="left:2px;top:166px;" width="14" height="14" viewBox="0 0 14 14"><path d="M5.5 4 V10 H10.5" fill="none" stroke="#555" stroke-width="1.5"/></svg>
<div class="r" style="left:157px;top:167px;width:795px;height:10px;background:#c6c6c6;"></div>
<div class="r" style="left:233px;top:167px;width:680px;height:10px;background:#ffffff;"></div>
<svg class="r" style="left:157px;top:167px;" width="795" height="10" viewBox="0 0 795 10"><rect x="12" y="5" width="1" height="2" fill="#444444"/><rect x="22" y="4" width="1" height="5" fill="#444444"/><rect x="31" y="5" width="1" height="2" fill="#444444"/><text x="3.0" y="8.8" text-anchor="middle" font-family="Liberation Sans" font-size="9.4" fill="#444444">2</text><rect x="50" y="5" width="1" height="2" fill="#444444"/><rect x="60" y="4" width="1" height="5" fill="#444444"/><rect x="69" y="5" width="1" height="2" fill="#444444"/><text x="40.7" y="8.8" text-anchor="middle" font-family="Liberation Sans" font-size="9.4" fill="#444444">1</text><rect x="88" y="5" width="1" height="2" fill="#444444"/><rect x="97" y="4" width="1" height="5" fill="#444444"/><rect x="107" y="5" width="1" height="2" fill="#444444"/><rect x="126" y="5" width="1" height="2" fill="#444444"/><rect x="135" y="4" width="1" height="5" fill="#444444"/><rect x="144" y="5" width="1" height="2" fill="#444444"/><text x="116.1" y="8.8" text-anchor="middle" font-family="Liberation Sans" font-size="9.4" fill="#444444">1</text><rect x="163" y="5" width="1" height="2" fill="#444444"/><rect x="173" y="4" width="1" height="5" fill="#444444"/><rect x="182" y="5" width="1" height="2" fill="#444444"/><text x="153.8" y="8.8" text-anchor="middle" font-family="Liberation Sans" font-size="9.4" fill="#444444">2</text><rect x="201" y="5" width="1" height="2" fill="#444444"/><rect x="210" y="4" width="1" height="5" fill="#444444"/><rect x="220" y="5" width="1" height="2" fill="#444444"/><text x="191.6" y="8.8" text-anchor="middle" font-family="Liberation Sans" font-size="9.4" fill="#444444">3</text><rect x="239" y="5" width="1" height="2" fill="#444444"/><rect x="248" y="4" width="1" height="5" fill="#444444"/><rect x="258" y="5" width="1" height="2" fill="#444444"/><text x="229.3" y="8.8" text-anchor="middle" font-family="Liberation Sans" font-size="9.4" fill="#444444">4</text><rect x="276" y="5" width="1" height="2" fill="#444444"/><rect x="286" y="4" width="1" height="5" fill="#444444"/><rect x="295" y="5" width="1" height="2" fill="#444444"/><text x="267.0" y="8.8" text-anchor="middle" font-family="Liberation Sans" font-size="9.4" fill="#444444">5</text><rect x="314" y="5" width="1" height="2" fill="#444444"/><rect x="324" y="4" width="1" height="5" fill="#444444"/><rect x="333" y="5" width="1" height="2" fill="#444444"/><text x="304.7" y="8.8" text-anchor="middle" font-family="Liberation Sans" font-size="9.4" fill="#444444">6</text><rect x="352" y="5" width="1" height="2" fill="#444444"/><rect x="361" y="4" width="1" height="5" fill="#444444"/><rect x="371" y="5" width="1" height="2" fill="#444444"/><text x="342.4" y="8.8" text-anchor="middle" font-family="Liberation Sans" font-size="9.4" fill="#444444">7</text><rect x="390" y="5" width="1" height="2" fill="#444444"/><rect x="399" y="4" width="1" height="5" fill="#444444"/><rect x="408" y="5" width="1" height="2" fill="#444444"/><text x="380.2" y="8.8" text-anchor="middle" font-family="Liberation Sans" font-size="9.4" fill="#444444">8</text><rect x="427" y="5" width="1" height="2" fill="#444444"/><rect x="437" y="4" width="1" height="5" fill="#444444"/><rect x="446" y="5" width="1" height="2" fill="#444444"/><text x="417.9" y="8.8" text-anchor="middle" font-family="Liberation Sans" font-size="9.4" fill="#444444">9</text><rect x="465" y="5" width="1" height="2" fill="#444444"/><rect x="474" y="4" width="1" height="5" fill="#444444"/><rect x="484" y="5" width="1" height="2" fill="#444444"/><text x="455.6" y="8.8" text-anchor="middle" font-family="Liberation Sans" font-size="9.4" fill="#444444">10</text><rect x="503" y="5" width="1" height="2" fill="#444444"/><rect x="512" y="4" width="1" height="5" fill="#444444"/><rect x="522" y="5" width="1" height="2" fill="#444444"/><text x="493.3" y="8.8" text-anchor="middle" font-family="Liberation Sans" font-size="9.4" fill="#444444">11</text><rect x="540" y="5" width="1" height="2" fill="#444444"/><rect x="550" y="4" width="1" height="5" fill="#444444"/><rect x="559" y="5" width="1" height="2" fill="#444444"/><text x="531.0" y="8.8" text-anchor="middle" font-family="Liberation Sans" font-size="9.4" fill="#444444">12</text><rect x="578" y="5" width="1" height="2" fill="#444444"/><rect x="588" y="4" width="1" height="5" fill="#444444"/><rect x="597" y="5" width="1" height="2" fill="#444444"/><text x="568.8" y="8.8" text-anchor="middle" font-family="Liberation Sans" font-size="9.4" fill="#444444">13</text><rect x="616" y="5" width="1" height="2" fill="#444444"/><rect x="625" y="4" width="1" height="5" fill="#444444"/><rect x="635" y="5" width="1" height="2" fill="#444444"/><text x="606.5" y="8.8" text-anchor="middle" font-family="Liberation Sans" font-size="9.4" fill="#444444">14</text><rect x="654" y="5" width="1" height="2" fill="#444444"/><rect x="663" y="4" width="1" height="5" fill="#444444"/><rect x="672" y="5" width="1" height="2" fill="#444444"/><text x="644.2" y="8.8" text-anchor="middle" font-family="Liberation Sans" font-size="9.4" fill="#444444">15</text><rect x="691" y="5" width="1" height="2" fill="#444444"/><rect x="701" y="4" width="1" height="5" fill="#444444"/><rect x="710" y="5" width="1" height="2" fill="#444444"/><text x="681.9" y="8.8" text-anchor="middle" font-family="Liberation Sans" font-size="9.4" fill="#444444">16</text><rect x="729" y="5" width="1" height="2" fill="#444444"/><rect x="739" y="4" width="1" height="5" fill="#444444"/><rect x="748" y="5" width="1" height="2" fill="#444444"/><text x="719.6" y="8.8" text-anchor="middle" font-family="Liberation Sans" font-size="9.4" fill="#444444">17</text><rect x="767" y="5" width="1" height="2" fill="#444444"/><rect x="776" y="4" width="1" height="5" fill="#444444"/><rect x="786" y="5" width="1" height="2" fill="#444444"/></svg>
<svg class="r" style="left:230px;top:163px;" width="12" height="24" viewBox="0 0 12 24"><path d="M1.5 1.5 H10.5 V3 L6 8.5 L1.5 3 Z" fill="#fff" stroke="#7a7a7a" stroke-width="1"/><path d="M6 8.5 L1.5 13 V15 H10.5 V13 Z" fill="#fff" stroke="#7a7a7a" stroke-width="1"/><rect x="1.5" y="16" width="9" height="7" fill="#fff" stroke="#7a7a7a" stroke-width="1"/><path d="M3 5 L9 11 M9 5 L3 11" stroke="#606060" stroke-width="0.9"/></svg>
<svg class="r" style="left:511px;top:167px;" width="12" height="14" viewBox="0 0 12 14"><path d="M2.5 1.5 V6 M5.2 1.5 V6 M7.8 1.5 V6 M10.5 1.5 V6 M2 2.8 H11 M2 4.6 H11" stroke="#6a6a6a" stroke-width="0.9"/><path d="M6 6 L11 11 V13.5 H2 V11 Z" fill="#fff" stroke="#7a7a7a" stroke-width="1"/></svg>
<svg class="r" style="left:910px;top:167px;" width="11" height="10" viewBox="0 0 11 10"><rect x="1" y="1" width="9.6" height="7.6" fill="#9a9a9a"/><rect x="1" y="1" width="1.6" height="1.6" fill="#555"/><rect x="1" y="3" width="1.6" height="1.6" fill="#555"/><rect x="1" y="5" width="1.6" height="1.6" fill="#555"/><rect x="1" y="7" width="1.6" height="1.6" fill="#555"/><rect x="3" y="1" width="1.6" height="1.6" fill="#555"/><rect x="3" y="3" width="1.6" height="1.6" fill="#555"/><rect x="3" y="5" width="1.6" height="1.6" fill="#555"/><rect x="3" y="7" width="1.6" height="1.6" fill="#555"/><rect x="5" y="1" width="1.6" height="1.6" fill="#555"/><rect x="5" y="3" width="1.6" height="1.6" fill="#555"/><rect x="5" y="5" width="1.6" height="1.6" fill="#555"/><rect x="5" y="7" width="1.6" height="1.6" fill="#555"/><rect x="7" y="1" width="1.6" height="1.6" fill="#555"/><rect x="7" y="3" width="1.6" height="1.6" fill="#555"/><rect x="7" y="5" width="1.6" height="1.6" fill="#555"/><rect x="7" y="7" width="1.6" height="1.6" fill="#555"/><rect x="9" y="1" width="1.6" height="1.6" fill="#555"/><rect x="9" y="3" width="1.6" height="1.6" fill="#555"/><rect x="9" y="5" width="1.6" height="1.6" fill="#555"/><rect x="9" y="7" width="1.6" height="1.6" fill="#555"/></svg>
<div class="r" style="left:3px;top:202px;width:11px;height:806px;background:#ffffff;"></div>
<div class="r" style="left:3px;top:202px;width:11px;height:39px;background:#c6c6c6;"></div>
<svg class="r" style="left:3px;top:202px;" width="11" height="806" viewBox="0 0 11 806"><rect x="6" y="11" width="2" height="1" fill="#444444"/><rect x="5" y="20" width="5" height="1" fill="#444444"/><rect x="6" y="30" width="2" height="1" fill="#444444"/><text transform="translate(9.2 1.3) rotate(-90)" text-anchor="middle" font-family="Liberation Sans" font-size="9.4" fill="#444444">1</text><rect x="6" y="48" width="2" height="1" fill="#444444"/><rect x="5" y="58" width="5" height="1" fill="#444444"/><rect x="6" y="67" width="2" height="1" fill="#444444"/><rect x="6" y="86" width="2" height="1" fill="#444444"/><rect x="5" y="96" width="5" height="1" fill="#444444"/><rect x="6" y="105" width="2" height="1" fill="#444444"/><text transform="translate(9.2 76.7) rotate(-90)" text-anchor="middle" font-family="Liberation Sans" font-size="9.4" fill="#444444">1</text><rect x="6" y="124" width="2" height="1" fill="#444444"/><rect x="5" y="133" width="5" height="1" fill="#444444"/><rect x="6" y="143" width="2" height="1" fill="#444444"/><text transform="translate(9.2 114.4) rotate(-90)" text-anchor="middle" font-family="Liberation Sans" font-size="9.4" fill="#444444">2</text><rect x="6" y="162" width="2" height="1" fill="#444444"/><rect x="5" y="171" width="5" height="1" fill="#444444"/><rect x="6" y="180" width="2" height="1" fill="#444444"/><text transform="translate(9.2 152.2) rotate(-90)" text-anchor="middle" font-family="Liberation Sans" font-size="9.4" fill="#444444">3</text><rect x="6" y="199" width="2" height="1" fill="#444444"/><rect x="5" y="209" width="5" height="1" fill="#444444"/><rect x="6" y="218" width="2" height="1" fill="#444444"/><rect x="6" y="237" width="2" height="1" fill="#444444"/><rect x="5" y="246" width="5" height="1" fill="#444444"/><rect x="6" y="256" width="2" height="1" fill="#444444"/><rect x="6" y="275" width="2" height="1" fill="#444444"/><rect x="5" y="284" width="5" height="1" fill="#444444"/><rect x="6" y="294" width="2" height="1" fill="#444444"/><rect x="6" y="312" width="2" height="1" fill="#444444"/><rect x="5" y="322" width="5" height="1" fill="#444444"/><rect x="6" y="331" width="2" height="1" fill="#444444"/><rect x="6" y="350" width="2" height="1" fill="#444444"/><rect x="5" y="360" width="5" height="1" fill="#444444"/><rect x="6" y="369" width="2" height="1" fill="#444444"/><text transform="translate(9.2 340.8) rotate(-90)" text-anchor="middle" font-family="Liberation Sans" font-size="9.4" fill="#444444">8</text><rect x="6" y="388" width="2" height="1" fill="#444444"/><rect x="5" y="397" width="5" height="1" fill="#444444"/><rect x="6" y="407" width="2" height="1" fill="#444444"/><text transform="translate(9.2 378.5) rotate(-90)" text-anchor="middle" font-family="Liberation Sans" font-size="9.4" fill="#444444">9</text><rect x="6" y="426" width="2" height="1" fill="#444444"/><rect x="5" y="435" width="5" height="1" fill="#444444"/><rect x="6" y="444" width="2" height="1" fill="#444444"/><text transform="translate(9.2 416.2) rotate(-90)" text-anchor="middle" font-family="Liberation Sans" font-size="9.4" fill="#444444">10</text><rect x="6" y="463" width="2" height="1" fill="#444444"/><rect x="5" y="473" width="5" height="1" fill="#444444"/><rect x="6" y="482" width="2" height="1" fill="#444444"/><text transform="translate(9.2 453.9) rotate(-90)" text-anchor="middle" font-family="Liberation Sans" font-size="9.4" fill="#444444">11</text><rect x="6" y="501" width="2" height="1" fill="#444444"/><rect x="5" y="510" width="5" height="1" fill="#444444"/><rect x="6" y="520" width="2" height="1" fill="#444444"/><text transform="translate(9.2 491.6) rotate(-90)" text-anchor="middle" font-family="Liberation Sans" font-size="9.4" fill="#444444">12</text><rect x="6" y="539" width="2" height="1" fill="#444444"/><rect x="5" y="548" width="5" height="1" fill="#444444"/><rect x="6" y="558" width="2" height="1" fill="#444444"/><text transform="translate(9.2 529.4) rotate(-90)" text-anchor="middle" font-family="Liberation Sans" font-size="9.4" fill="#444444">13</text><rect x="6" y="577" width="2" height="1" fill="#444444"/><rect x="5" y="586" width="5" height="1" fill="#444444"/><rect x="6" y="595" width="2" height="1" fill="#444444"/><text transform="translate(9.2 567.1) rotate(-90)" text-anchor="middle" font-family="Liberation Sans" font-size="9.4" fill="#444444">14</text><rect x="6" y="614" width="2" height="1" fill="#444444"/><rect x="5" y="624" width="5" height="1" fill="#444444"/><rect x="6" y="633" width="2" height="1" fill="#444444"/><text transform="translate(9.2 604.8) rotate(-90)" text-anchor="middle" font-family="Liberation Sans" font-size="9.4" fill="#444444">15</text><rect x="6" y="652" width="2" height="1" fill="#444444"/><rect x="5" y="661" width="5" height="1" fill="#444444"/><rect x="6" y="671" width="2" height="1" fill="#444444"/><text transform="translate(9.2 642.5) rotate(-90)" text-anchor="middle" font-family="Liberation Sans" font-size="9.4" fill="#444444">16</text><rect x="6" y="690" width="2" height="1" fill="#444444"/><rect x="5" y="699" width="5" height="1" fill="#444444"/><rect x="6" y="709" width="2" height="1" fill="#444444"/><text transform="translate(9.2 680.2) rotate(-90)" text-anchor="middle" font-family="Liberation Sans" font-size="9.4" fill="#444444">17</text><rect x="6" y="727" width="2" height="1" fill="#444444"/><rect x="5" y="737" width="5" height="1" fill="#444444"/><rect x="6" y="746" width="2" height="1" fill="#444444"/><text transform="translate(9.2 718.0) rotate(-90)" text-anchor="middle" font-family="Liberation Sans" font-size="9.4" fill="#444444">18</text><rect x="6" y="765" width="2" height="1" fill="#444444"/><rect x="5" y="775" width="5" height="1" fill="#444444"/><rect x="6" y="784" width="2" height="1" fill="#444444"/><text transform="translate(9.2 755.7) rotate(-90)" text-anchor="middle" font-family="Liberation Sans" font-size="9.4" fill="#444444">19</text><rect x="6" y="803" width="2" height="1" fill="#444444"/><text transform="translate(9.2 793.4) rotate(-90)" text-anchor="middle" font-family="Liberation Sans" font-size="9.4" fill="#444444">20</text></svg>
<div class="r" style="left:3px;top:391px;width:11px;height:7px;background:#c6c6c6;"></div>
<div class="r" style="left:3px;top:410px;width:11px;height:7px;background:#c6c6c6;"></div>
<div class="r" style="left:3px;top:430px;width:11px;height:7px;background:#c6c6c6;"></div>
<div class="r" style="left:3px;top:449px;width:11px;height:7px;background:#c6c6c6;"></div>
<div class="r" style="left:3px;top:468px;width:11px;height:6px;background:#c6c6c6;"></div>
<div class="r" style="left:3px;top:487px;width:11px;height:7px;background:#c6c6c6;"></div>
<div class="r" style="left:3px;top:504px;width:11px;height:7px;background:#c6c6c6;"></div>
<div class="r" style="left:3px;top:519px;width:11px;height:7px;background:#c6c6c6;"></div>
</body></html>
